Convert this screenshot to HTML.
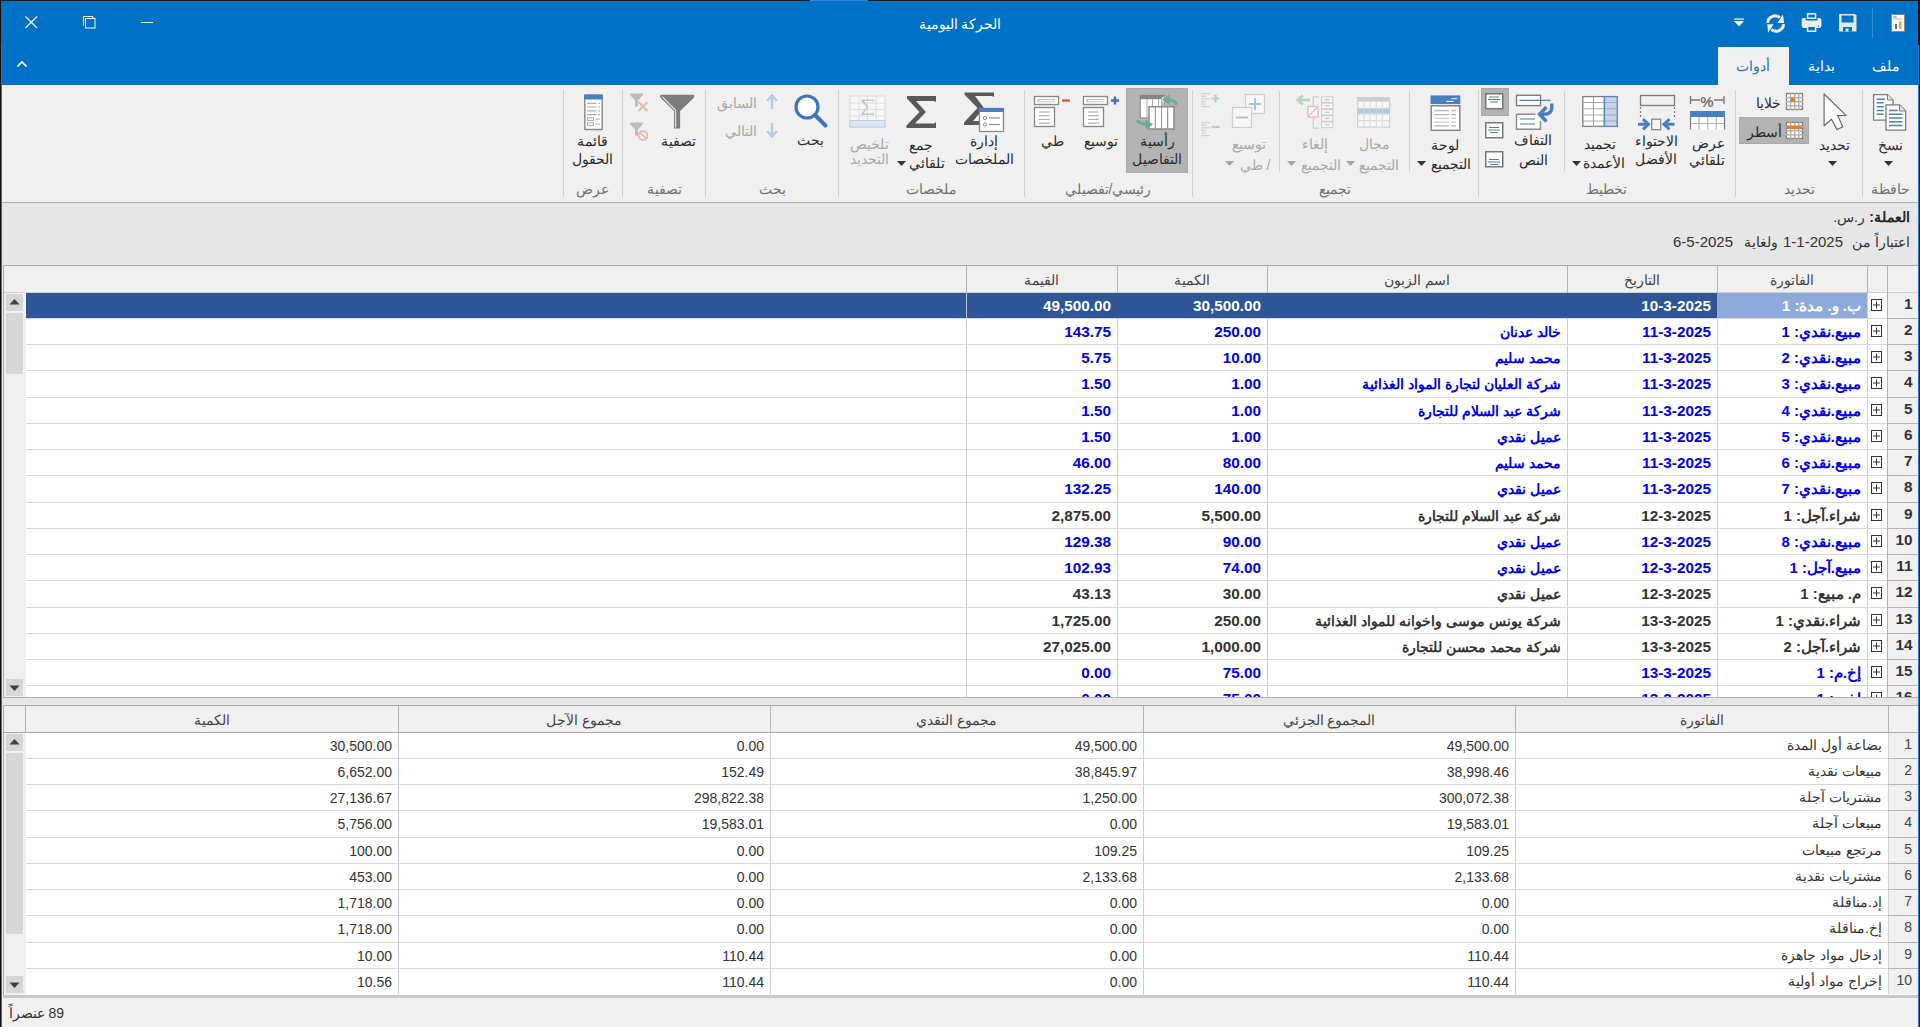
<!DOCTYPE html><html><head><meta charset="utf-8"><style>
*{box-sizing:border-box;margin:0;padding:0}
html,body{width:1920px;height:1027px;overflow:hidden;background:#f0f0f0;font-family:"Liberation Sans",sans-serif;color:#222;position:relative}
.a{position:absolute}
.t{position:absolute;white-space:nowrap;line-height:1}
.r{direction:rtl}
svg{position:absolute;overflow:visible}
</style></head><body>

<div class="a" style="left:0px;top:0px;width:1920px;height:85px;background:#0072c6;"></div>
<div class="a" style="left:0px;top:0px;width:1920px;height:1px;background:#1b1b1b;"></div>
<div class="a" style="left:810px;top:0px;width:58px;height:1px;background:#2d8be0;"></div>
<div class="t r" style="left:760.0px;top:12.0px;width:400px;height:24px;line-height:24px;text-align:center;font-size:14px;color:#ffffff;font-weight:400;">الحركة اليومية</div>
<svg style="left:20px;top:10px" width="160" height="30" viewBox="0 0 160 30"><path d="M5.5 6.5 L17 18 M17 6.5 L5.5 18" stroke="#f2f2f2" stroke-width="1.2" fill="none"/><path d="M63.5 15.5 V6.5 H73 V8.5" stroke="#f2f2f2" stroke-width="1" fill="none"/><rect x="65.5" y="8.5" width="9.5" height="9.5" stroke="#f2f2f2" stroke-width="1" fill="none"/><path d="M121 12.5 H133" stroke="#f2f2f2" stroke-width="1" fill="none"/></svg>
<svg style="left:14px;top:58px" width="16" height="12" viewBox="0 0 16 12"><path d="M3.5 8.5 L8 4 L12.5 8.5" stroke="#ffffff" stroke-width="1.6" fill="none"/></svg>
<div class="a" style="left:1872px;top:8px;width:1px;height:30px;background:#3d8ed6;"></div>
<svg style="left:1890px;top:13px" width="18" height="20" viewBox="0 0 18 20"><rect x="1.5" y="1.5" width="13" height="17" fill="#fafafa" stroke="#8a8a8a" stroke-width="1"/><rect x="3.5" y="3.5" width="3" height="1" fill="#4472c4"/><rect x="3.5" y="5.5" width="9" height="1" fill="#bbb"/><rect x="5" y="11" width="2" height="5" fill="#4472c4"/><rect x="9" y="8.5" width="2.5" height="7.5" fill="#e8a33d"/></svg>
<svg style="left:1837px;top:12px" width="22" height="22" viewBox="0 0 22 22"><path d="M2 2 H18 L19.5 3.5 V19.5 H2 Z" fill="#e6e6e6"/><rect x="4.5" y="3.5" width="12" height="7" fill="#0072c6"/><rect x="6" y="15" width="9" height="4.5" fill="#0072c6"/><rect x="8.5" y="16.5" width="3" height="3" fill="#e6e6e6"/></svg>
<svg style="left:1800px;top:12px" width="24" height="22" viewBox="0 0 24 22"><rect x="1.7" y="5.9" width="19.7" height="10" rx="1.8" fill="#eeeeee"/><rect x="5.6" y="5.9" width="11.9" height="2.6" fill="#0072c6"/><rect x="7.55" y="1.85" width="8" height="4.4" fill="#0072c6" stroke="#eeeeee" stroke-width="1.5"/><rect x="7.55" y="14.2" width="8" height="5" fill="#0072c6" stroke="#eeeeee" stroke-width="1.5"/><rect x="18" y="13.5" width="1" height="1.2" fill="#0072c6"/></svg>
<svg style="left:1764px;top:12px" width="22" height="22" viewBox="0 0 22 22"><g><path d="M3.6 10.9 A7.5 7.5 0 0 1 15.8 5.6" stroke="#eeeeee" stroke-width="3" fill="none"/><path d="M19 2.3 L20 10.9 L13.6 10.9 Z" fill="#eeeeee"/></g><g transform="rotate(180 11.6 11.55)"><path d="M3.6 10.9 A7.5 7.5 0 0 1 15.8 5.6" stroke="#eeeeee" stroke-width="3" fill="none"/><path d="M19 2.3 L20 10.9 L13.6 10.9 Z" fill="#eeeeee"/></g></svg>
<svg style="left:1732px;top:16px" width="14" height="14" viewBox="0 0 14 14"><rect x="2" y="2.5" width="10" height="1.2" fill="#f0f0f0"/><path d="M2 5 H12 L7 10.5 Z" fill="#f0f0f0"/></svg>
<div class="a" style="left:1718px;top:47px;width:71px;height:38px;background:#f0f0f0;"></div>
<div class="t r" style="left:1553.0px;top:54.0px;width:400px;height:24px;line-height:24px;text-align:center;font-size:14px;color:#2a6ebd;font-weight:400;">أدوات</div>
<div class="t r" style="left:1621.0px;top:54.0px;width:400px;height:24px;line-height:24px;text-align:center;font-size:14px;color:#ffffff;font-weight:400;">بداية</div>
<div class="t r" style="left:1686.0px;top:54.0px;width:400px;height:24px;line-height:24px;text-align:center;font-size:14px;color:#ffffff;font-weight:400;">ملف</div>
<div class="a" style="left:0px;top:0px;width:1px;height:1027px;background:#111;"></div>
<div class="a" style="left:1px;top:45px;width:1px;height:982px;background:#1a78d0;"></div>
<div class="a" style="left:1918px;top:45px;width:1px;height:982px;background:#1a78d0;"></div>
<div class="a" style="left:1919px;top:0px;width:1px;height:1027px;background:#111;"></div>
<div class="a" style="left:1918px;top:0px;width:1px;height:45px;background:#111;"></div>
<div class="a" style="left:2px;top:85px;width:1916px;height:117px;background:#f0f0f0;"></div>
<div class="a" style="left:2px;top:202px;width:1916px;height:1px;background:#acacac;"></div>
<div class="a" style="left:1862px;top:90px;width:1px;height:107px;background:#d2d2d2;"></div>
<div class="a" style="left:1735px;top:90px;width:1px;height:107px;background:#d2d2d2;"></div>
<div class="a" style="left:1478px;top:90px;width:1px;height:107px;background:#d2d2d2;"></div>
<div class="a" style="left:1192px;top:90px;width:1px;height:107px;background:#d2d2d2;"></div>
<div class="a" style="left:1024px;top:90px;width:1px;height:107px;background:#d2d2d2;"></div>
<div class="a" style="left:838px;top:90px;width:1px;height:107px;background:#d2d2d2;"></div>
<div class="a" style="left:705px;top:90px;width:1px;height:107px;background:#d2d2d2;"></div>
<div class="a" style="left:622px;top:90px;width:1px;height:107px;background:#d2d2d2;"></div>
<div class="a" style="left:563px;top:90px;width:1px;height:107px;background:#d2d2d2;"></div>
<div class="a" style="left:1564px;top:91px;width:1px;height:81px;background:#d2d2d2;"></div>
<div class="a" style="left:1409px;top:91px;width:1px;height:81px;background:#d2d2d2;"></div>
<div class="a" style="left:1279px;top:91px;width:1px;height:81px;background:#d2d2d2;"></div>
<div class="t r" style="left:1690.0px;top:177.0px;width:400px;height:24px;line-height:24px;text-align:center;font-size:14px;color:#707070;font-weight:400;">حافظة</div>
<div class="t r" style="left:1599.0px;top:177.0px;width:400px;height:24px;line-height:24px;text-align:center;font-size:14px;color:#707070;font-weight:400;">تحديد</div>
<div class="t r" style="left:1406.0px;top:177.0px;width:400px;height:24px;line-height:24px;text-align:center;font-size:14px;color:#707070;font-weight:400;">تخطيط</div>
<div class="t r" style="left:1135.0px;top:177.0px;width:400px;height:24px;line-height:24px;text-align:center;font-size:14px;color:#707070;font-weight:400;">تجميع</div>
<div class="t r" style="left:908.0px;top:177.0px;width:400px;height:24px;line-height:24px;text-align:center;font-size:14px;color:#707070;font-weight:400;">رئيسي/تفصيلي</div>
<div class="t r" style="left:731.0px;top:177.0px;width:400px;height:24px;line-height:24px;text-align:center;font-size:14px;color:#707070;font-weight:400;">ملخصات</div>
<div class="t r" style="left:572.0px;top:177.0px;width:400px;height:24px;line-height:24px;text-align:center;font-size:14px;color:#707070;font-weight:400;">بحث</div>
<div class="t r" style="left:464.0px;top:177.0px;width:400px;height:24px;line-height:24px;text-align:center;font-size:14px;color:#707070;font-weight:400;">تصفية</div>
<div class="t r" style="left:392.0px;top:177.0px;width:400px;height:24px;line-height:24px;text-align:center;font-size:14px;color:#707070;font-weight:400;">عرض</div>
<svg style="left:1872px;top:93px" width="36" height="40" viewBox="0 0 36 40"><path d="M1.6 1.6 H15.5 L21 7 V27.2 H1.6 Z" fill="#fff" stroke="#7a7a7a" stroke-width="1.3"/><path d="M15.5 1.6 V7 H21" fill="#e6e6e6" stroke="#7a7a7a" stroke-width="1"/><path d="M4.6 6.2 H13 M4.6 9.8 H11.8 M4.6 13.8 H11.8 M4.6 17.4 H11.8 M4.6 21.2 H11.8" stroke="#4a7fc0" stroke-width="1.5"/><path d="M14 11.9 H27.5 L33.6 18 V37.2 H14 Z" fill="#fff" stroke="#7a7a7a" stroke-width="1.3"/><path d="M27.5 11.9 V18 H33.6" fill="#e6e6e6" stroke="#7a7a7a" stroke-width="1"/><path d="M17 17.4 H25.7 M17 21.2 H30.5 M17 25 H30.5 M17 28.7 H30.5 M17 32.4 H30.5" stroke="#4a7fc0" stroke-width="1.5"/></svg>
<div class="t r" style="left:1690.0px;top:133.0px;width:400px;height:24px;line-height:24px;text-align:center;font-size:14px;color:#2a2a2a;font-weight:400;">نسخ</div>
<svg style="left:1883.5px;top:160.5px" width="9" height="5" viewBox="0 0 9 5"><path d="M0 0 H9 L4.5 5 Z" fill="#333"/></svg>
<svg style="left:1822px;top:92px" width="28" height="40" viewBox="0 0 28 40"><path d="M2.1 2 L2.1 33.8 L9.6 27.2 L15 37.6 L20.8 34.8 L15.6 23.6 L24 23.4 Z" fill="#fff" stroke="#6a6a6a" stroke-width="1.2" stroke-linejoin="round"/></svg>
<div class="t r" style="left:1634.0px;top:133.0px;width:400px;height:24px;line-height:24px;text-align:center;font-size:14px;color:#2a2a2a;font-weight:400;">تحديد</div>
<svg style="left:1827.5px;top:160.5px" width="9" height="5" viewBox="0 0 9 5"><path d="M0 0 H9 L4.5 5 Z" fill="#333"/></svg>
<svg style="left:1786px;top:93px" width="18" height="18" viewBox="0 0 18 18"><rect x="0.5" y="0.5" width="16" height="16" fill="#fff" stroke="#808080" stroke-width="1.3"/><rect x="3.8999999999999995" y="0" width="1.4" height="17" fill="#b0b0b0"/><rect x="0" y="3.8999999999999995" width="17" height="1.4" fill="#b0b0b0"/><rect x="7.999999999999999" y="0" width="1.4" height="17" fill="#b0b0b0"/><rect x="0" y="7.999999999999999" width="17" height="1.4" fill="#b0b0b0"/><rect x="12.1" y="0" width="1.4" height="17" fill="#b0b0b0"/><rect x="0" y="12.1" width="17" height="1.4" fill="#b0b0b0"/><rect x="5" y="5" width="4" height="4" fill="#e87b1c"/></svg>
<div class="t r" style="left:1568.0px;top:91.0px;width:400px;height:24px;line-height:24px;text-align:center;font-size:14px;color:#2a2a2a;font-weight:400;">خلايا</div>
<div class="a" style="left:1739px;top:117px;width:70px;height:27px;background:#b3b3b3;border:1px solid #a8a8a8"></div>
<svg style="left:1786px;top:122px" width="18" height="18" viewBox="0 0 18 18"><rect x="0.5" y="0.5" width="16" height="16" fill="#fff" stroke="#808080" stroke-width="1.3"/><rect x="3.8999999999999995" y="0" width="1.4" height="17" fill="#b0b0b0"/><rect x="0" y="3.8999999999999995" width="17" height="1.4" fill="#b0b0b0"/><rect x="7.999999999999999" y="0" width="1.4" height="17" fill="#b0b0b0"/><rect x="0" y="7.999999999999999" width="17" height="1.4" fill="#b0b0b0"/><rect x="12.1" y="0" width="1.4" height="17" fill="#b0b0b0"/><rect x="0" y="12.1" width="17" height="1.4" fill="#b0b0b0"/><rect x="1" y="3.5" width="15" height="3.5" fill="#e87b1c"/></svg>
<div class="t r" style="left:1564.0px;top:120.0px;width:400px;height:24px;line-height:24px;text-align:center;font-size:14px;color:#2a2a2a;font-weight:400;">أسطر</div>
<svg style="left:1689px;top:94px" width="38" height="37" viewBox="0 0 38 37"><path d="M1.5 2 V10 M1.5 6 H11 M35 2 V10 M35 6 H25" stroke="#777" stroke-width="1.3" fill="none"/><text x="18" y="12.5" font-family="Liberation Sans" font-weight="bold" font-size="15" text-anchor="middle" fill="#777">%</text><rect x="1" y="23" width="35" height="12.5" fill="#fff"/><rect x="1" y="17" width="35" height="6" fill="#4a7fc0"/><path d="M10 23 V35.5 M18.7 23 V35.5 M27.3 23 V35.5 M1 29.5 H36" stroke="#b4b4b4" stroke-width="1.2" fill="none"/><path d="M1.5 23 V35.5 M35.5 23 V35.5" stroke="#808080" stroke-width="1.3" fill="none"/></svg>
<div class="t r" style="left:1508.0px;top:131.0px;width:400px;height:24px;line-height:24px;text-align:center;font-size:14px;color:#2a2a2a;font-weight:400;">عرض</div>
<div class="t r" style="left:1507.0px;top:148.0px;width:400px;height:24px;line-height:24px;text-align:center;font-size:14px;color:#2a2a2a;font-weight:400;">تلقائي</div>
<svg style="left:1638px;top:94px" width="38" height="37" viewBox="0 0 38 37"><rect x="2.5" y="1.5" width="34" height="10" fill="none" stroke="#7a7a7a" stroke-width="1.3"/><path d="M2.5 13 V23 M36.5 13 V23" stroke="#777" stroke-width="1.2" stroke-dasharray="2 2" fill="none"/><rect x="13.7" y="25.2" width="9" height="10.5" fill="#f4f4f4" stroke="#888" stroke-width="1.3"/><path d="M0 30.3 H9 M5 25.2 L10.5 30.3 L5 35.4" stroke="#4a7fc0" stroke-width="3" fill="none"/><path d="M36.5 30.3 H27.5 M31.5 25.2 L26 30.3 L31.5 35.4" stroke="#4a7fc0" stroke-width="3" fill="none"/></svg>
<div class="t r" style="left:1456.0px;top:129.0px;width:400px;height:24px;line-height:24px;text-align:center;font-size:14px;color:#2a2a2a;font-weight:400;">الاحتواء</div>
<div class="t r" style="left:1456.0px;top:147.0px;width:400px;height:24px;line-height:24px;text-align:center;font-size:14px;color:#2a2a2a;font-weight:400;">الأفضل</div>
<svg style="left:1582px;top:96px" width="37" height="32" viewBox="0 0 37 32"><rect x="0.8" y="0.6" width="34.5" height="29.8" fill="#fff" stroke="#808080" stroke-width="1.3"/><rect x="22.6" y="0.6" width="12.6" height="29.8" fill="#c5d6ea"/><path d="M11.5 1 V31 M1 6.5 H35 M1 12.8 H35 M1 19 H35 M1 25 H35" stroke="#a8a8a8" stroke-width="1.1" fill="none"/><path d="M22.2 0.6 V30.4" stroke="#808080" stroke-width="1.2"/><rect x="22.6" y="0.6" width="12.6" height="29.8" fill="none" stroke="#5b8cc6" stroke-width="1.3"/></svg>
<div class="t r" style="left:1400.0px;top:132.0px;width:400px;height:24px;line-height:24px;text-align:center;font-size:14px;color:#2a2a2a;font-weight:400;">تجميد</div>
<div class="t r" style="left:1404.0px;top:151.0px;width:400px;height:24px;line-height:24px;text-align:center;font-size:14px;color:#2a2a2a;font-weight:400;">الأعمدة</div>
<svg style="left:1571.5px;top:160.5px" width="9" height="5" viewBox="0 0 9 5"><path d="M0 0 H9 L4.5 5 Z" fill="#333"/></svg>
<svg style="left:1515px;top:94px" width="40" height="37" viewBox="0 0 40 37"><rect x="1.5" y="1.3" width="24" height="10.3" fill="#fff" stroke="#7d7d7d" stroke-width="1.4"/><path d="M5 6.4 H35" stroke="#4a7fc0" stroke-width="1.2" stroke-linecap="round"/><rect x="1.5" y="20.2" width="24" height="15" fill="#fff"/><path d="M20.5 20.2 H1.5 V35.2 H25.5 V27" fill="none" stroke="#8a8a8a" stroke-width="1.4"/><path d="M5 25 H20 M5 30 H20" stroke="#7fa6d2" stroke-width="1.5"/><path d="M36.8 9.5 V13.5 C36.8 18 33.5 20.3 28.5 20.3 H25" stroke="#4a7fc0" stroke-width="3.4" fill="none"/><path d="M31.5 13 L24.5 20.3 L31.5 27.5" stroke="#4a7fc0" stroke-width="3.4" fill="none" stroke-linejoin="miter"/></svg>
<div class="t r" style="left:1333.0px;top:128.0px;width:400px;height:24px;line-height:24px;text-align:center;font-size:14px;color:#2a2a2a;font-weight:400;">التفاف</div>
<div class="t r" style="left:1333.0px;top:148.0px;width:400px;height:24px;line-height:24px;text-align:center;font-size:14px;color:#2a2a2a;font-weight:400;">النص</div>
<div class="a" style="left:1481px;top:88px;width:28px;height:28px;background:#b3b3b3;border:1px solid #a8a8a8"></div>
<svg style="left:1485px;top:93px" width="19" height="17" viewBox="0 0 19 17"><rect x="0.75" y="0.75" width="17" height="15" fill="#fff" stroke="#777" stroke-width="1.5"/><path d="M4 4.0 H14 M3 6.5 H15 M5 9.0 H13" stroke="#4a7fc0" stroke-width="1.1"/></svg>
<svg style="left:1485px;top:122px" width="19" height="17" viewBox="0 0 19 17"><rect x="0.75" y="0.75" width="17" height="15" fill="#fff" stroke="#777" stroke-width="1.5"/><path d="M4 5.5 H14 M3 8.0 H15 M5 10.5 H13" stroke="#4a7fc0" stroke-width="1.1"/></svg>
<svg style="left:1485px;top:151px" width="19" height="17" viewBox="0 0 19 17"><rect x="0.75" y="0.75" width="17" height="15" fill="#fff" stroke="#777" stroke-width="1.5"/><path d="M4 8.5 H14 M3 11.0 H15 M5 13.5 H13" stroke="#4a7fc0" stroke-width="1.1"/></svg>
<svg style="left:1429.5px;top:94.5px" width="32" height="37" viewBox="0 0 32 37"><rect x="0.5" y="0.4" width="29.8" height="8.7" fill="#4a7fc0"/><path d="M21.3 3.6 H27.3" stroke="#c8d8ea" stroke-width="1.3"/><path d="M16.3 6.4 H23.4" stroke="#ffffff" stroke-width="1.1"/><rect x="1.2" y="10.8" width="28.6" height="24.5" fill="#fff" stroke="#858585" stroke-width="1.5"/><path d="M4.2 15.7 H19 M21.3 15.7 H26" stroke="#b4b4b4" stroke-width="1.2"/><path d="M4.2 19.6 H19 M21.3 19.6 H26" stroke="#b4b4b4" stroke-width="1.2"/><path d="M4.2 23.3 H19 M21.3 23.3 H26" stroke="#cccccc" stroke-width="1.2"/><path d="M4.2 27.2 H19 M21.3 27.2 H26" stroke="#cccccc" stroke-width="1.2"/><path d="M4.2 30.8 H19 M21.3 30.8 H26" stroke="#b4b4b4" stroke-width="1.2"/></svg>
<div class="t r" style="left:1245.0px;top:133.0px;width:400px;height:24px;line-height:24px;text-align:center;font-size:14px;color:#2a2a2a;font-weight:400;">لوحة</div>
<div class="t r" style="left:1251.0px;top:152.0px;width:400px;height:24px;line-height:24px;text-align:center;font-size:14px;color:#2a2a2a;font-weight:400;">التجميع</div>
<svg style="left:1416.5px;top:160.5px" width="9" height="5" viewBox="0 0 9 5"><path d="M0 0 H9 L4.5 5 Z" fill="#333"/></svg>
<svg style="left:1357px;top:97px" width="34" height="31" viewBox="0 0 34 31"><rect x="0.6" y="0.6" width="32" height="29.5" fill="#f7f7f7" stroke="#d0d0d0" stroke-width="1.2"/><rect x="0.6" y="0.6" width="32" height="4" fill="#cdcdcd"/><path d="M6.8 4 V30 M13 4 V30 M19.2 4 V30 M25.4 4 V30 M1 11.3 H32.5 M1 17.2 H32.5 M1 23.6 H32.5" stroke="#dcdcdc" stroke-width="1.1"/><rect x="1" y="11.6" width="31.5" height="5" fill="#b3c8de"/><path d="M6.8 11.6 V16.6 M13 11.6 V16.6 M19.2 11.6 V16.6 M25.4 11.6 V16.6" stroke="#c9d7e6" stroke-width="1"/></svg>
<div class="t r" style="left:1174.0px;top:132.0px;width:400px;height:24px;line-height:24px;text-align:center;font-size:14px;color:#a8a8a8;font-weight:400;">مجال</div>
<div class="t r" style="left:1179.0px;top:153.0px;width:400px;height:24px;line-height:24px;text-align:center;font-size:14px;color:#a8a8a8;font-weight:400;">التجميع</div>
<svg style="left:1345.5px;top:160.5px" width="9" height="5" viewBox="0 0 9 5"><path d="M0 0 H9 L4.5 5 Z" fill="#a6a6a6"/></svg>
<svg style="left:1296px;top:95px" width="40" height="36" viewBox="0 0 40 36"><path d="M1 5 H14 M7 0.5 L1.5 5 L7 9.5" stroke="#b6d3c4" stroke-width="2.5" fill="none"/><path d="M23 1.8 H17.2 V33.2 H23" stroke="#cfcfcf" stroke-width="1.3" fill="none"/><rect x="12" y="11.5" width="10" height="10.5" fill="#fff" stroke="#ebb5a8" stroke-width="1.3"/><path d="M13 21 L21 12.5" stroke="#ebb5a8" stroke-width="1.3"/><rect x="25.6" y="1.8" width="11.3" height="5.6" fill="#f7f7f7" stroke="#cfcfcf" stroke-width="1.2"/><path d="M28.7 4.6 H33.7" stroke="#a9c0da" stroke-width="1"/><rect x="25.6" y="8.1" width="11.3" height="5.6" fill="#f7f7f7" stroke="#cfcfcf" stroke-width="1.2"/><path d="M28.7 10.899999999999999 H33.7" stroke="#a9c0da" stroke-width="1"/><rect x="25.6" y="14.4" width="11.3" height="5.6" fill="#f7f7f7" stroke="#cfcfcf" stroke-width="1.2"/><path d="M28.7 17.2 H33.7" stroke="#a9c0da" stroke-width="1"/><rect x="25.6" y="20.7" width="11.3" height="5.6" fill="#f7f7f7" stroke="#cfcfcf" stroke-width="1.2"/><path d="M28.7 23.5 H33.7" stroke="#a9c0da" stroke-width="1"/><rect x="25.6" y="27.0" width="11.3" height="5.6" fill="#f7f7f7" stroke="#cfcfcf" stroke-width="1.2"/><path d="M28.7 29.799999999999997 H33.7" stroke="#a9c0da" stroke-width="1"/></svg>
<div class="t r" style="left:1115.0px;top:132.0px;width:400px;height:24px;line-height:24px;text-align:center;font-size:14px;color:#a8a8a8;font-weight:400;">إلغاء</div>
<div class="t r" style="left:1121.0px;top:153.0px;width:400px;height:24px;line-height:24px;text-align:center;font-size:14px;color:#a8a8a8;font-weight:400;">التجميع</div>
<svg style="left:1286.5px;top:160.5px" width="9" height="5" viewBox="0 0 9 5"><path d="M0 0 H9 L4.5 5 Z" fill="#a6a6a6"/></svg>
<svg style="left:1231px;top:94px" width="37" height="36" viewBox="0 0 37 36"><rect x="14.5" y="0.5" width="19" height="19" fill="#f7f7f7" stroke="#cfcfcf" stroke-width="1.2"/><path d="M24 4 V16 M18 10 H30" stroke="#a9c0da" stroke-width="2"/><rect x="1.5" y="13.5" width="19" height="20" fill="#f7f7f7" stroke="#cfcfcf" stroke-width="1.2"/><path d="M5 23.5 H17" stroke="#a9c0da" stroke-width="2"/></svg>
<div class="t r" style="left:1049.0px;top:132.0px;width:400px;height:24px;line-height:24px;text-align:center;font-size:14px;color:#a8a8a8;font-weight:400;">توسيع</div>
<div class="t r" style="left:1055.0px;top:153.0px;width:400px;height:24px;line-height:24px;text-align:center;font-size:14px;color:#a8a8a8;font-weight:400;">/ طي</div>
<svg style="left:1224.5px;top:160.5px" width="9" height="5" viewBox="0 0 9 5"><path d="M0 0 H9 L4.5 5 Z" fill="#a6a6a6"/></svg>
<svg style="left:1201px;top:93px" width="20" height="18" viewBox="0 0 20 18"><rect x="0" y="0.0" width="9" height="1.2" fill="#d0d0d0"/><rect x="0" y="2.6" width="5" height="1.2" fill="#d0d0d0"/><rect x="0" y="5.2" width="9" height="1.2" fill="#d0d0d0"/><rect x="0" y="7.800000000000001" width="5" height="1.2" fill="#d0d0d0"/><rect x="0" y="10.4" width="5" height="1.2" fill="#d0d0d0"/><rect x="0" y="13.0" width="9" height="1.2" fill="#d0d0d0"/><path d="M14.5 1.5 V9.5 M10.5 5.5 H18.5" stroke="#b6d3c4" stroke-width="2.2"/></svg>
<svg style="left:1201px;top:122px" width="20" height="18" viewBox="0 0 20 18"><rect x="0" y="0.0" width="9" height="1.2" fill="#d0d0d0"/><rect x="0" y="2.6" width="5" height="1.2" fill="#d0d0d0"/><rect x="0" y="5.2" width="9" height="1.2" fill="#d0d0d0"/><rect x="0" y="7.800000000000001" width="5" height="1.2" fill="#d0d0d0"/><rect x="0" y="10.4" width="5" height="1.2" fill="#d0d0d0"/><rect x="0" y="13.0" width="9" height="1.2" fill="#d0d0d0"/><path d="M10.5 5 H18.5" stroke="#ebb5a8" stroke-width="2.2"/></svg>
<div class="a" style="left:1126px;top:88px;width:62px;height:85px;background:#b3b3b3;border:1px solid #aaaaaa"></div>
<svg style="left:1136px;top:94px" width="42" height="37" viewBox="0 0 42 37"><rect x="4.3" y="1.4" width="24" height="22.5" fill="#fff" stroke="#8a8a8a" stroke-width="1"/><path d="M3.8 0.9 H29 L25 5.3 H3.8 Z" fill="#858585"/><path d="M11 5 V24 M16.5 5 V12 M22.6 5 V12" stroke="#a8a8a8" stroke-width="1"/><path d="M25 5.3 L30 12 H25 Z" fill="#b3b3b3"/><rect x="13" y="12.7" width="25" height="22.3" fill="#fff" stroke="#8a8a8a" stroke-width="1.5"/><path d="M19.4 13 V35 M25.5 13 V35 M31.6 13 V35" stroke="#9a9a9a" stroke-width="1.2"/><path d="M30 5.6 C35 5.6 39.5 7 40.3 10.8" stroke="#70a996" stroke-width="3.2" fill="none"/><path d="M25.6 5.4 L33.4 0.6 L33.8 10.8 Z" fill="#70a996"/><path d="M12.5 30.2 C7 30.2 2.5 29.5 1.3 26.2" stroke="#70a996" stroke-width="3.2" fill="none"/><path d="M17 30.2 L9.2 25.6 L9.5 35.8 Z" fill="#70a996"/></svg>
<div class="t r" style="left:957.0px;top:129.0px;width:400px;height:24px;line-height:24px;text-align:center;font-size:14px;color:#2a2a2a;font-weight:400;">رأسية</div>
<div class="t r" style="left:957.0px;top:147.0px;width:400px;height:24px;line-height:24px;text-align:center;font-size:14px;color:#2a2a2a;font-weight:400;">التفاصيل</div>
<svg style="left:1082px;top:95px" width="38" height="34" viewBox="0 0 38 34"><rect x="1.5" y="1.5" width="24" height="8" fill="#fff" stroke="#888" stroke-width="1.3"/><path d="M5 4.5 H22 M5 6.8 H22" stroke="#c2c2c2" stroke-width="1"/><path d="M5 4.5 V7" stroke="#999" stroke-width="1"/><rect x="1.5" y="12.5" width="20" height="19" fill="#fff" stroke="#888" stroke-width="1.3"/><path d="M6 17.0 H17" stroke="#b0b0b0" stroke-width="1.2"/><path d="M6 20.7 H17" stroke="#b0b0b0" stroke-width="1.2"/><path d="M6 24.4 H17" stroke="#b0b0b0" stroke-width="1.2"/><path d="M6 28.1 H17" stroke="#b0b0b0" stroke-width="1.2"/><path d="M33 1.5 V9.5 M29 5.5 H37" stroke="#3c72b6" stroke-width="2.4"/></svg>
<div class="t r" style="left:901.0px;top:129.0px;width:400px;height:24px;line-height:24px;text-align:center;font-size:14px;color:#2a2a2a;font-weight:400;">توسيع</div>
<svg style="left:1033px;top:95px" width="38" height="34" viewBox="0 0 38 34"><rect x="1.5" y="1.5" width="24" height="8" fill="#fff" stroke="#888" stroke-width="1.3"/><path d="M5 4.5 H22 M5 6.8 H22" stroke="#c2c2c2" stroke-width="1"/><path d="M5 4.5 V7" stroke="#999" stroke-width="1"/><rect x="1.5" y="12.5" width="20" height="19" fill="#fff" stroke="#888" stroke-width="1.3"/><path d="M6 17.0 H17" stroke="#b0b0b0" stroke-width="1.2"/><path d="M6 20.7 H17" stroke="#b0b0b0" stroke-width="1.2"/><path d="M6 24.4 H17" stroke="#b0b0b0" stroke-width="1.2"/><path d="M6 28.1 H17" stroke="#b0b0b0" stroke-width="1.2"/><path d="M29 5.5 H37" stroke="#e0553a" stroke-width="2.4"/></svg>
<div class="t r" style="left:852.0px;top:129.0px;width:400px;height:24px;line-height:24px;text-align:center;font-size:14px;color:#2a2a2a;font-weight:400;">طي</div>
<svg style="left:962px;top:91px" width="44" height="42" viewBox="0 0 44 42"><path d="M2.5 1.5 H32 L32 6 L30 5 H13 L22 17 L11 30 H32 V34 H2 L2 31.5 L15.5 17 L2.5 3.5 Z" fill="#595959"/><rect x="17.5" y="17.5" width="24" height="23" fill="#fff" stroke="#888" stroke-width="1.3"/><rect x="17" y="17" width="25" height="4" fill="#4a7fc0"/><circle cx="23" cy="27" r="1.6" fill="none" stroke="#888" stroke-width="1"/><path d="M27 27 H38" stroke="#888" stroke-width="1.1"/><circle cx="23" cy="33.5" r="1.6" fill="none" stroke="#888" stroke-width="1"/><path d="M27 33.5 H38" stroke="#888" stroke-width="1.1"/></svg>
<div class="t r" style="left:784.0px;top:129.0px;width:400px;height:24px;line-height:24px;text-align:center;font-size:14px;color:#2a2a2a;font-weight:400;">إدارة</div>
<div class="t r" style="left:784.0px;top:147.0px;width:400px;height:24px;line-height:24px;text-align:center;font-size:14px;color:#2a2a2a;font-weight:400;">الملخصات</div>
<svg style="left:905px;top:95px" width="34" height="36" viewBox="0 0 34 36"><path d="M2 1 H31 V7 L29 6 H11 L21 17 L10 28.5 H29 L31 27 V33 H1.5 V30.5 L14.5 17 L2 3.5 Z" fill="#595959"/></svg>
<div class="t r" style="left:721.0px;top:133.0px;width:400px;height:24px;line-height:24px;text-align:center;font-size:14px;color:#2a2a2a;font-weight:400;">جمع</div>
<div class="t r" style="left:727.0px;top:151.0px;width:400px;height:24px;line-height:24px;text-align:center;font-size:14px;color:#2a2a2a;font-weight:400;">تلقائي</div>
<svg style="left:896.5px;top:160.5px" width="9" height="5" viewBox="0 0 9 5"><path d="M0 0 H9 L4.5 5 Z" fill="#333"/></svg>
<svg style="left:849px;top:95px" width="38" height="35" viewBox="0 0 38 35"><rect x="1" y="1" width="35" height="31" fill="#f7f7f7" stroke="#d9d9d9" stroke-width="1"/><path d="M10 1 V32 M18.5 1 V32 M27 1 V32 M1 8 H36 M1 14.5 H36 M1 21 H36" stroke="#dedede" stroke-width="1"/><rect x="1" y="25.5" width="35" height="6.5" fill="#dde7f2" stroke="#b8cde3" stroke-width="1"/><path d="M12 4.5 H25 V7 L23.5 6 H15 L19.5 12 L14.5 18.5 H23.5 L25 17.5 V20 H12 V19 L17.5 12 L12 5.5 Z" fill="#c6c6c6"/></svg>
<div class="t r" style="left:669.0px;top:132.0px;width:400px;height:24px;line-height:24px;text-align:center;font-size:14px;color:#a8a8a8;font-weight:400;">تلخيص</div>
<div class="t r" style="left:669.0px;top:147.0px;width:400px;height:24px;line-height:24px;text-align:center;font-size:14px;color:#a8a8a8;font-weight:400;">التحديد</div>
<svg style="left:792px;top:92px" width="38" height="38" viewBox="0 0 38 38"><circle cx="15" cy="15" r="11" fill="#fff" stroke="#3e74b8" stroke-width="3.2"/><path d="M23 23 L33.5 33.5" stroke="#3e74b8" stroke-width="4" stroke-linecap="round"/></svg>
<div class="t r" style="left:610.0px;top:128.0px;width:400px;height:24px;line-height:24px;text-align:center;font-size:14px;color:#2a2a2a;font-weight:400;">بحث</div>
<svg style="left:764px;top:93px" width="16" height="18" viewBox="0 0 16 18"><path d="M8 16 V3 M3 8 L8 2.5 L13 8" stroke="#b4cbe3" stroke-width="2.4" fill="none"/></svg>
<svg style="left:764px;top:121px" width="16" height="18" viewBox="0 0 16 18"><path d="M8 2 V15 M3 10 L8 15.5 L13 10" stroke="#b4cbe3" stroke-width="2.4" fill="none"/></svg>
<div class="t r" style="left:-43px;top:91.0px;width:800px;height:24px;line-height:24px;text-align:right;font-size:14px;color:#a8a8a8;font-weight:400;">السابق</div>
<div class="t r" style="left:-43px;top:119.0px;width:800px;height:24px;line-height:24px;text-align:right;font-size:14px;color:#a8a8a8;font-weight:400;">التالي</div>
<svg style="left:659px;top:94px" width="38" height="36" viewBox="0 0 38 36"><path d="M1.3 0.8 H35.1 V3.4 L21.1 17 V34.4 H15 V17 L1.3 3.4 Z" fill="#7d7d7d"/><path d="M3.2 2.6 L16.6 16.3 V33.4" fill="none" stroke="#e2e2e2" stroke-width="1.2"/></svg>
<div class="t r" style="left:478.0px;top:129.0px;width:400px;height:24px;line-height:24px;text-align:center;font-size:14px;color:#2a2a2a;font-weight:400;">تصفية</div>
<svg style="left:629px;top:92px" width="22" height="22" viewBox="0 0 22 22"><path d="M1 1.5 H14 V3 L9 8.5 V14.5 H6 V8.5 L1 3 Z" fill="#bdbdbd"/><path d="M9.5 10 L18.5 19 M18.5 10 L9.5 19" stroke="#ebb5a8" stroke-width="1.8"/></svg>
<svg style="left:629px;top:121px" width="22" height="22" viewBox="0 0 22 22"><path d="M1 1.5 H14 V3 L9 8.5 V14.5 H6 V8.5 L1 3 Z" fill="#bdbdbd"/><circle cx="14" cy="14.5" r="4.5" fill="#f0f0f0" stroke="#ebb5a8" stroke-width="1.8"/><path d="M11 11.5 L17 17.5" stroke="#ebb5a8" stroke-width="1.6"/></svg>
<svg style="left:583px;top:94px" width="22" height="37" viewBox="0 0 22 37"><rect x="1.8" y="1.2" width="17.4" height="34.3" rx="0.6" fill="#fff" stroke="#888" stroke-width="1.4"/><rect x="1.1" y="0.5" width="18.8" height="5" fill="#4a7fc0"/><path d="M4 9.3 H13.5 M15.3 9.3 H17" stroke="#b0b0b0" stroke-width="1.2"/><path d="M4 13 H13.5 M15.3 13 H17" stroke="#b0b0b0" stroke-width="1.2"/><path d="M4 16.9 H13.5 M15.3 16.9 H17" stroke="#b0b0b0" stroke-width="1.2"/><path d="M4 20.6 H13.5 M15.3 20.6 H17" stroke="#b0b0b0" stroke-width="1.2"/><rect x="4.5" y="23.8" width="6" height="2.6" fill="none" stroke="#a8a8a8" stroke-width="1"/><path d="M12.3 25.1 H17" stroke="#c0c0c0" stroke-width="1.2"/><rect x="4.5" y="28.8" width="6" height="2.6" fill="none" stroke="#a8a8a8" stroke-width="1"/><path d="M12.3 30.1 H17" stroke="#c0c0c0" stroke-width="1.2"/></svg>
<div class="t r" style="left:392.0px;top:129.0px;width:400px;height:24px;line-height:24px;text-align:center;font-size:14px;color:#2a2a2a;font-weight:400;">قائمة</div>
<div class="t r" style="left:392.0px;top:147.0px;width:400px;height:24px;line-height:24px;text-align:center;font-size:14px;color:#2a2a2a;font-weight:400;">الحقول</div>
<div class="a" style="left:2px;top:203px;width:1916px;height:62px;background:#e6e6e6;"></div>
<div class="t r" style="left:1110px;top:205.0px;width:800px;height:24px;line-height:24px;text-align:right;font-size:14px;color:#222;font-weight:400;"><b>العملة:</b></div>
<div class="t r" style="left:1065px;top:205.0px;width:800px;height:24px;line-height:24px;text-align:right;font-size:14px;color:#333;font-weight:400;">ر.س.</div>
<div class="t r" style="left:1110px;top:230.0px;width:800px;height:24px;line-height:24px;text-align:right;font-size:14px;color:#333;font-weight:400;">اعتباراً من</div>
<div class="t r" style="left:1043px;top:230.0px;width:800px;height:24px;line-height:24px;text-align:right;font-size:15px;color:#333;font-weight:400;"><span style="direction:ltr;unicode-bidi:embed">1-1-2025</span></div>
<div class="t r" style="left:978px;top:230.0px;width:800px;height:24px;line-height:24px;text-align:right;font-size:14.4px;color:#333;font-weight:400;">ولغاية</div>
<div class="t r" style="left:933px;top:230.0px;width:800px;height:24px;line-height:24px;text-align:right;font-size:15px;color:#333;font-weight:400;"><span style="direction:ltr;unicode-bidi:embed">6-5-2025</span></div>
<div class="a" style="left:3px;top:265px;width:1915px;height:432px;background:#ffffff;"></div>
<div class="a" style="left:3px;top:265px;width:1915px;height:1px;background:#a8a8a8;"></div>
<div class="a" style="left:3px;top:265px;width:1px;height:432px;background:#a8a8a8;"></div>
<div class="a" style="left:4px;top:266px;width:1914px;height:27px;background:#f0f0f0;"></div>
<div class="a" style="left:4px;top:292px;width:1914px;height:1px;background:#d0d0d0;"></div>
<div class="a" style="left:4px;top:293px;width:22px;height:404px;background:#f0f0f0;"></div>
<div class="a" style="left:6px;top:294px;width:17px;height:17px;background:#d6d6d6;"></div>
<svg style="left:6px;top:294px" width="17" height="17" viewBox="0 0 17 17"><path d="M3.5 10.5 H13.5 L8.5 5 Z" fill="#404040"/></svg>
<div class="a" style="left:6px;top:313px;width:17px;height:61px;background:#d6d6d6;"></div>
<div class="a" style="left:6px;top:679px;width:17px;height:17px;background:#d6d6d6;"></div>
<svg style="left:6px;top:679px" width="17" height="17" viewBox="0 0 17 17"><path d="M3.5 6.5 H13.5 L8.5 12 Z" fill="#404040"/></svg>
<div class="a" style="left:966px;top:266px;width:1px;height:27px;background:#b4b4b4;"></div>
<div class="a" style="left:1117px;top:266px;width:1px;height:27px;background:#b4b4b4;"></div>
<div class="a" style="left:1267px;top:266px;width:1px;height:27px;background:#b4b4b4;"></div>
<div class="a" style="left:1567px;top:266px;width:1px;height:27px;background:#b4b4b4;"></div>
<div class="a" style="left:1717px;top:266px;width:1px;height:27px;background:#b4b4b4;"></div>
<div class="a" style="left:1867px;top:266px;width:1px;height:27px;background:#b4b4b4;"></div>
<div class="a" style="left:1887px;top:266px;width:1px;height:27px;background:#b4b4b4;"></div>
<div class="t r" style="left:841.5px;top:267.5px;width:400px;height:24px;line-height:24px;text-align:center;font-size:14px;color:#444;font-weight:400;">القيمة</div>
<div class="t r" style="left:992.0px;top:267.5px;width:400px;height:24px;line-height:24px;text-align:center;font-size:14px;color:#444;font-weight:400;">الكمية</div>
<div class="t r" style="left:1217.0px;top:267.5px;width:400px;height:24px;line-height:24px;text-align:center;font-size:14px;color:#444;font-weight:400;">اسم الزبون</div>
<div class="t r" style="left:1442.0px;top:267.5px;width:400px;height:24px;line-height:24px;text-align:center;font-size:14px;color:#444;font-weight:400;">التاريخ</div>
<div class="t r" style="left:1592.0px;top:267.5px;width:400px;height:24px;line-height:24px;text-align:center;font-size:14px;color:#444;font-weight:400;">الفاتورة</div>
<div class="a" style="left:26px;top:292px;width:1892px;height:405px;overflow:hidden">
<div class="a" style="left:1861px;top:1px;width:31px;height:25px;background:#f0f0f0;"></div>
<div class="a" style="left:0px;top:1px;width:1841px;height:25px;background:#2e5596;"></div>
<div class="a" style="left:1691px;top:1px;width:150px;height:25px;background:#8eaadb;"></div>
<div class="a" style="left:0px;top:26px;width:1861px;height:1px;background:#d8d8d8;"></div>
<div class="a" style="left:1861px;top:26px;width:31px;height:1px;background:#b4b4b4;"></div>
<div class="a" style="left:940px;top:1px;width:1px;height:25px;background:#b8c4d8;"></div>
<div class="a" style="left:1091px;top:1px;width:1px;height:25px;background:#2e5596;"></div>
<div class="a" style="left:1241px;top:1px;width:1px;height:25px;background:#2e5596;"></div>
<div class="a" style="left:1541px;top:1px;width:1px;height:25px;background:#2e5596;"></div>
<div class="a" style="left:1691px;top:1px;width:1px;height:25px;background:#8eaadb;"></div>
<div class="a" style="left:1841px;top:1px;width:1px;height:25px;background:#c6d0dc;"></div>
<div class="a" style="left:1861px;top:1px;width:1px;height:25px;background:#b4b4b4;"></div>
<div class="a" style="left:1845px;top:7px;width:11px;height:12px;background:transparent;border:1px solid #333"></div>
<svg style="left:1845px;top:7px" width="11" height="12"><path d="M5.5 2.5 V9.5 M2 6 H9" stroke="#333" stroke-width="1"/></svg>
<div class="t" style="left:1235px;top:1.625px;width:600px;height:24px;line-height:24px;text-align:right;direction:rtl;font-size:14.9px;color:#ffffff;font-weight:700;">ب. و. مدة: 1</div>
<div class="t" style="left:1085px;top:1.625px;width:600px;height:24px;line-height:24px;text-align:right;direction:ltr;font-size:15.3px;color:#ffffff;font-weight:700;">10-3-2025</div>
<div class="t" style="left:635px;top:1.625px;width:600px;height:24px;line-height:24px;text-align:right;direction:ltr;font-size:15.3px;color:#ffffff;font-weight:700;">30,500.00</div>
<div class="t" style="left:485px;top:1.625px;width:600px;height:24px;line-height:24px;text-align:right;direction:ltr;font-size:15.3px;color:#ffffff;font-weight:700;">49,500.00</div>
<div class="t" style="left:1286.5px;top:-0.375px;width:600px;height:24px;line-height:24px;text-align:right;direction:ltr;font-size:15.3px;color:#333;font-weight:700;">1</div>
<div class="a" style="left:1861px;top:27px;width:31px;height:25px;background:#f0f0f0;"></div>
<div class="a" style="left:0px;top:52px;width:1861px;height:1px;background:#d8d8d8;"></div>
<div class="a" style="left:1861px;top:52px;width:31px;height:1px;background:#b4b4b4;"></div>
<div class="a" style="left:940px;top:27px;width:1px;height:25px;background:#d0d0d0;"></div>
<div class="a" style="left:1091px;top:27px;width:1px;height:25px;background:#c6d0dc;"></div>
<div class="a" style="left:1241px;top:27px;width:1px;height:25px;background:#c6d0dc;"></div>
<div class="a" style="left:1541px;top:27px;width:1px;height:25px;background:#c6d0dc;"></div>
<div class="a" style="left:1691px;top:27px;width:1px;height:25px;background:#c6d0dc;"></div>
<div class="a" style="left:1841px;top:27px;width:1px;height:25px;background:#c6d0dc;"></div>
<div class="a" style="left:1861px;top:27px;width:1px;height:25px;background:#b4b4b4;"></div>
<div class="a" style="left:1845px;top:33px;width:11px;height:12px;background:transparent;border:1px solid #333"></div>
<svg style="left:1845px;top:33px" width="11" height="12"><path d="M5.5 2.5 V9.5 M2 6 H9" stroke="#333" stroke-width="1"/></svg>
<div class="t" style="left:1235px;top:27.875px;width:600px;height:24px;line-height:24px;text-align:right;direction:rtl;font-size:14.9px;color:#0000f0;font-weight:700;">مبيع.نقدي: 1</div>
<div class="t" style="left:1085px;top:27.875px;width:600px;height:24px;line-height:24px;text-align:right;direction:ltr;font-size:15.3px;color:#0000f0;font-weight:700;">11-3-2025</div>
<div class="t" style="left:935px;top:27.875px;width:600px;height:24px;line-height:24px;text-align:right;direction:rtl;font-size:14.2px;color:#0000f0;font-weight:700;">خالد عدنان</div>
<div class="t" style="left:635px;top:27.875px;width:600px;height:24px;line-height:24px;text-align:right;direction:ltr;font-size:15.3px;color:#0000f0;font-weight:700;">250.00</div>
<div class="t" style="left:485px;top:27.875px;width:600px;height:24px;line-height:24px;text-align:right;direction:ltr;font-size:15.3px;color:#0000f0;font-weight:700;">143.75</div>
<div class="t" style="left:1286.5px;top:25.875px;width:600px;height:24px;line-height:24px;text-align:right;direction:ltr;font-size:15.3px;color:#333;font-weight:700;">2</div>
<div class="a" style="left:1861px;top:53px;width:31px;height:25px;background:#f0f0f0;"></div>
<div class="a" style="left:0px;top:78px;width:1861px;height:1px;background:#d8d8d8;"></div>
<div class="a" style="left:1861px;top:78px;width:31px;height:1px;background:#b4b4b4;"></div>
<div class="a" style="left:940px;top:53px;width:1px;height:25px;background:#d0d0d0;"></div>
<div class="a" style="left:1091px;top:53px;width:1px;height:25px;background:#c6d0dc;"></div>
<div class="a" style="left:1241px;top:53px;width:1px;height:25px;background:#c6d0dc;"></div>
<div class="a" style="left:1541px;top:53px;width:1px;height:25px;background:#c6d0dc;"></div>
<div class="a" style="left:1691px;top:53px;width:1px;height:25px;background:#c6d0dc;"></div>
<div class="a" style="left:1841px;top:53px;width:1px;height:25px;background:#c6d0dc;"></div>
<div class="a" style="left:1861px;top:53px;width:1px;height:25px;background:#b4b4b4;"></div>
<div class="a" style="left:1845px;top:59px;width:11px;height:12px;background:transparent;border:1px solid #333"></div>
<svg style="left:1845px;top:59px" width="11" height="12"><path d="M5.5 2.5 V9.5 M2 6 H9" stroke="#333" stroke-width="1"/></svg>
<div class="t" style="left:1235px;top:54.125px;width:600px;height:24px;line-height:24px;text-align:right;direction:rtl;font-size:14.9px;color:#0000f0;font-weight:700;">مبيع.نقدي: 2</div>
<div class="t" style="left:1085px;top:54.125px;width:600px;height:24px;line-height:24px;text-align:right;direction:ltr;font-size:15.3px;color:#0000f0;font-weight:700;">11-3-2025</div>
<div class="t" style="left:935px;top:54.125px;width:600px;height:24px;line-height:24px;text-align:right;direction:rtl;font-size:14.2px;color:#0000f0;font-weight:700;">محمد سليم</div>
<div class="t" style="left:635px;top:54.125px;width:600px;height:24px;line-height:24px;text-align:right;direction:ltr;font-size:15.3px;color:#0000f0;font-weight:700;">10.00</div>
<div class="t" style="left:485px;top:54.125px;width:600px;height:24px;line-height:24px;text-align:right;direction:ltr;font-size:15.3px;color:#0000f0;font-weight:700;">5.75</div>
<div class="t" style="left:1286.5px;top:52.125px;width:600px;height:24px;line-height:24px;text-align:right;direction:ltr;font-size:15.3px;color:#333;font-weight:700;">3</div>
<div class="a" style="left:1861px;top:79px;width:31px;height:26px;background:#f0f0f0;"></div>
<div class="a" style="left:0px;top:105px;width:1861px;height:1px;background:#d8d8d8;"></div>
<div class="a" style="left:1861px;top:105px;width:31px;height:1px;background:#b4b4b4;"></div>
<div class="a" style="left:940px;top:79px;width:1px;height:26px;background:#d0d0d0;"></div>
<div class="a" style="left:1091px;top:79px;width:1px;height:26px;background:#c6d0dc;"></div>
<div class="a" style="left:1241px;top:79px;width:1px;height:26px;background:#c6d0dc;"></div>
<div class="a" style="left:1541px;top:79px;width:1px;height:26px;background:#c6d0dc;"></div>
<div class="a" style="left:1691px;top:79px;width:1px;height:26px;background:#c6d0dc;"></div>
<div class="a" style="left:1841px;top:79px;width:1px;height:26px;background:#c6d0dc;"></div>
<div class="a" style="left:1861px;top:79px;width:1px;height:26px;background:#b4b4b4;"></div>
<div class="a" style="left:1845px;top:85px;width:11px;height:12px;background:transparent;border:1px solid #333"></div>
<svg style="left:1845px;top:85px" width="11" height="12"><path d="M5.5 2.5 V9.5 M2 6 H9" stroke="#333" stroke-width="1"/></svg>
<div class="t" style="left:1235px;top:80.375px;width:600px;height:24px;line-height:24px;text-align:right;direction:rtl;font-size:14.9px;color:#0000f0;font-weight:700;">مبيع.نقدي: 3</div>
<div class="t" style="left:1085px;top:80.375px;width:600px;height:24px;line-height:24px;text-align:right;direction:ltr;font-size:15.3px;color:#0000f0;font-weight:700;">11-3-2025</div>
<div class="t" style="left:935px;top:80.375px;width:600px;height:24px;line-height:24px;text-align:right;direction:rtl;font-size:14.2px;color:#0000f0;font-weight:700;">شركة العليان لتجارة المواد الغذائية</div>
<div class="t" style="left:635px;top:80.375px;width:600px;height:24px;line-height:24px;text-align:right;direction:ltr;font-size:15.3px;color:#0000f0;font-weight:700;">1.00</div>
<div class="t" style="left:485px;top:80.375px;width:600px;height:24px;line-height:24px;text-align:right;direction:ltr;font-size:15.3px;color:#0000f0;font-weight:700;">1.50</div>
<div class="t" style="left:1286.5px;top:78.375px;width:600px;height:24px;line-height:24px;text-align:right;direction:ltr;font-size:15.3px;color:#333;font-weight:700;">4</div>
<div class="a" style="left:1861px;top:106px;width:31px;height:25px;background:#f0f0f0;"></div>
<div class="a" style="left:0px;top:131px;width:1861px;height:1px;background:#d8d8d8;"></div>
<div class="a" style="left:1861px;top:131px;width:31px;height:1px;background:#b4b4b4;"></div>
<div class="a" style="left:940px;top:106px;width:1px;height:25px;background:#d0d0d0;"></div>
<div class="a" style="left:1091px;top:106px;width:1px;height:25px;background:#c6d0dc;"></div>
<div class="a" style="left:1241px;top:106px;width:1px;height:25px;background:#c6d0dc;"></div>
<div class="a" style="left:1541px;top:106px;width:1px;height:25px;background:#c6d0dc;"></div>
<div class="a" style="left:1691px;top:106px;width:1px;height:25px;background:#c6d0dc;"></div>
<div class="a" style="left:1841px;top:106px;width:1px;height:25px;background:#c6d0dc;"></div>
<div class="a" style="left:1861px;top:106px;width:1px;height:25px;background:#b4b4b4;"></div>
<div class="a" style="left:1845px;top:112px;width:11px;height:12px;background:transparent;border:1px solid #333"></div>
<svg style="left:1845px;top:112px" width="11" height="12"><path d="M5.5 2.5 V9.5 M2 6 H9" stroke="#333" stroke-width="1"/></svg>
<div class="t" style="left:1235px;top:106.625px;width:600px;height:24px;line-height:24px;text-align:right;direction:rtl;font-size:14.9px;color:#0000f0;font-weight:700;">مبيع.نقدي: 4</div>
<div class="t" style="left:1085px;top:106.625px;width:600px;height:24px;line-height:24px;text-align:right;direction:ltr;font-size:15.3px;color:#0000f0;font-weight:700;">11-3-2025</div>
<div class="t" style="left:935px;top:106.625px;width:600px;height:24px;line-height:24px;text-align:right;direction:rtl;font-size:14.2px;color:#0000f0;font-weight:700;">شركة عبد السلام للتجارة</div>
<div class="t" style="left:635px;top:106.625px;width:600px;height:24px;line-height:24px;text-align:right;direction:ltr;font-size:15.3px;color:#0000f0;font-weight:700;">1.00</div>
<div class="t" style="left:485px;top:106.625px;width:600px;height:24px;line-height:24px;text-align:right;direction:ltr;font-size:15.3px;color:#0000f0;font-weight:700;">1.50</div>
<div class="t" style="left:1286.5px;top:104.625px;width:600px;height:24px;line-height:24px;text-align:right;direction:ltr;font-size:15.3px;color:#333;font-weight:700;">5</div>
<div class="a" style="left:1861px;top:132px;width:31px;height:25px;background:#f0f0f0;"></div>
<div class="a" style="left:0px;top:157px;width:1861px;height:1px;background:#d8d8d8;"></div>
<div class="a" style="left:1861px;top:157px;width:31px;height:1px;background:#b4b4b4;"></div>
<div class="a" style="left:940px;top:132px;width:1px;height:25px;background:#d0d0d0;"></div>
<div class="a" style="left:1091px;top:132px;width:1px;height:25px;background:#c6d0dc;"></div>
<div class="a" style="left:1241px;top:132px;width:1px;height:25px;background:#c6d0dc;"></div>
<div class="a" style="left:1541px;top:132px;width:1px;height:25px;background:#c6d0dc;"></div>
<div class="a" style="left:1691px;top:132px;width:1px;height:25px;background:#c6d0dc;"></div>
<div class="a" style="left:1841px;top:132px;width:1px;height:25px;background:#c6d0dc;"></div>
<div class="a" style="left:1861px;top:132px;width:1px;height:25px;background:#b4b4b4;"></div>
<div class="a" style="left:1845px;top:138px;width:11px;height:12px;background:transparent;border:1px solid #333"></div>
<svg style="left:1845px;top:138px" width="11" height="12"><path d="M5.5 2.5 V9.5 M2 6 H9" stroke="#333" stroke-width="1"/></svg>
<div class="t" style="left:1235px;top:132.875px;width:600px;height:24px;line-height:24px;text-align:right;direction:rtl;font-size:14.9px;color:#0000f0;font-weight:700;">مبيع.نقدي: 5</div>
<div class="t" style="left:1085px;top:132.875px;width:600px;height:24px;line-height:24px;text-align:right;direction:ltr;font-size:15.3px;color:#0000f0;font-weight:700;">11-3-2025</div>
<div class="t" style="left:935px;top:132.875px;width:600px;height:24px;line-height:24px;text-align:right;direction:rtl;font-size:14.2px;color:#0000f0;font-weight:700;">عميل نقدي</div>
<div class="t" style="left:635px;top:132.875px;width:600px;height:24px;line-height:24px;text-align:right;direction:ltr;font-size:15.3px;color:#0000f0;font-weight:700;">1.00</div>
<div class="t" style="left:485px;top:132.875px;width:600px;height:24px;line-height:24px;text-align:right;direction:ltr;font-size:15.3px;color:#0000f0;font-weight:700;">1.50</div>
<div class="t" style="left:1286.5px;top:130.875px;width:600px;height:24px;line-height:24px;text-align:right;direction:ltr;font-size:15.3px;color:#333;font-weight:700;">6</div>
<div class="a" style="left:1861px;top:158px;width:31px;height:25px;background:#f0f0f0;"></div>
<div class="a" style="left:0px;top:183px;width:1861px;height:1px;background:#d8d8d8;"></div>
<div class="a" style="left:1861px;top:183px;width:31px;height:1px;background:#b4b4b4;"></div>
<div class="a" style="left:940px;top:158px;width:1px;height:25px;background:#d0d0d0;"></div>
<div class="a" style="left:1091px;top:158px;width:1px;height:25px;background:#c6d0dc;"></div>
<div class="a" style="left:1241px;top:158px;width:1px;height:25px;background:#c6d0dc;"></div>
<div class="a" style="left:1541px;top:158px;width:1px;height:25px;background:#c6d0dc;"></div>
<div class="a" style="left:1691px;top:158px;width:1px;height:25px;background:#c6d0dc;"></div>
<div class="a" style="left:1841px;top:158px;width:1px;height:25px;background:#c6d0dc;"></div>
<div class="a" style="left:1861px;top:158px;width:1px;height:25px;background:#b4b4b4;"></div>
<div class="a" style="left:1845px;top:164px;width:11px;height:12px;background:transparent;border:1px solid #333"></div>
<svg style="left:1845px;top:164px" width="11" height="12"><path d="M5.5 2.5 V9.5 M2 6 H9" stroke="#333" stroke-width="1"/></svg>
<div class="t" style="left:1235px;top:159.125px;width:600px;height:24px;line-height:24px;text-align:right;direction:rtl;font-size:14.9px;color:#0000f0;font-weight:700;">مبيع.نقدي: 6</div>
<div class="t" style="left:1085px;top:159.125px;width:600px;height:24px;line-height:24px;text-align:right;direction:ltr;font-size:15.3px;color:#0000f0;font-weight:700;">11-3-2025</div>
<div class="t" style="left:935px;top:159.125px;width:600px;height:24px;line-height:24px;text-align:right;direction:rtl;font-size:14.2px;color:#0000f0;font-weight:700;">محمد سليم</div>
<div class="t" style="left:635px;top:159.125px;width:600px;height:24px;line-height:24px;text-align:right;direction:ltr;font-size:15.3px;color:#0000f0;font-weight:700;">80.00</div>
<div class="t" style="left:485px;top:159.125px;width:600px;height:24px;line-height:24px;text-align:right;direction:ltr;font-size:15.3px;color:#0000f0;font-weight:700;">46.00</div>
<div class="t" style="left:1286.5px;top:157.125px;width:600px;height:24px;line-height:24px;text-align:right;direction:ltr;font-size:15.3px;color:#333;font-weight:700;">7</div>
<div class="a" style="left:1861px;top:184px;width:31px;height:26px;background:#f0f0f0;"></div>
<div class="a" style="left:0px;top:210px;width:1861px;height:1px;background:#d8d8d8;"></div>
<div class="a" style="left:1861px;top:210px;width:31px;height:1px;background:#b4b4b4;"></div>
<div class="a" style="left:940px;top:184px;width:1px;height:26px;background:#d0d0d0;"></div>
<div class="a" style="left:1091px;top:184px;width:1px;height:26px;background:#c6d0dc;"></div>
<div class="a" style="left:1241px;top:184px;width:1px;height:26px;background:#c6d0dc;"></div>
<div class="a" style="left:1541px;top:184px;width:1px;height:26px;background:#c6d0dc;"></div>
<div class="a" style="left:1691px;top:184px;width:1px;height:26px;background:#c6d0dc;"></div>
<div class="a" style="left:1841px;top:184px;width:1px;height:26px;background:#c6d0dc;"></div>
<div class="a" style="left:1861px;top:184px;width:1px;height:26px;background:#b4b4b4;"></div>
<div class="a" style="left:1845px;top:190px;width:11px;height:12px;background:transparent;border:1px solid #333"></div>
<svg style="left:1845px;top:190px" width="11" height="12"><path d="M5.5 2.5 V9.5 M2 6 H9" stroke="#333" stroke-width="1"/></svg>
<div class="t" style="left:1235px;top:185.375px;width:600px;height:24px;line-height:24px;text-align:right;direction:rtl;font-size:14.9px;color:#0000f0;font-weight:700;">مبيع.نقدي: 7</div>
<div class="t" style="left:1085px;top:185.375px;width:600px;height:24px;line-height:24px;text-align:right;direction:ltr;font-size:15.3px;color:#0000f0;font-weight:700;">11-3-2025</div>
<div class="t" style="left:935px;top:185.375px;width:600px;height:24px;line-height:24px;text-align:right;direction:rtl;font-size:14.2px;color:#0000f0;font-weight:700;">عميل نقدي</div>
<div class="t" style="left:635px;top:185.375px;width:600px;height:24px;line-height:24px;text-align:right;direction:ltr;font-size:15.3px;color:#0000f0;font-weight:700;">140.00</div>
<div class="t" style="left:485px;top:185.375px;width:600px;height:24px;line-height:24px;text-align:right;direction:ltr;font-size:15.3px;color:#0000f0;font-weight:700;">132.25</div>
<div class="t" style="left:1286.5px;top:183.375px;width:600px;height:24px;line-height:24px;text-align:right;direction:ltr;font-size:15.3px;color:#333;font-weight:700;">8</div>
<div class="a" style="left:1861px;top:211px;width:31px;height:25px;background:#f0f0f0;"></div>
<div class="a" style="left:0px;top:236px;width:1861px;height:1px;background:#d8d8d8;"></div>
<div class="a" style="left:1861px;top:236px;width:31px;height:1px;background:#b4b4b4;"></div>
<div class="a" style="left:940px;top:211px;width:1px;height:25px;background:#d0d0d0;"></div>
<div class="a" style="left:1091px;top:211px;width:1px;height:25px;background:#c6d0dc;"></div>
<div class="a" style="left:1241px;top:211px;width:1px;height:25px;background:#c6d0dc;"></div>
<div class="a" style="left:1541px;top:211px;width:1px;height:25px;background:#c6d0dc;"></div>
<div class="a" style="left:1691px;top:211px;width:1px;height:25px;background:#c6d0dc;"></div>
<div class="a" style="left:1841px;top:211px;width:1px;height:25px;background:#c6d0dc;"></div>
<div class="a" style="left:1861px;top:211px;width:1px;height:25px;background:#b4b4b4;"></div>
<div class="a" style="left:1845px;top:217px;width:11px;height:12px;background:transparent;border:1px solid #333"></div>
<svg style="left:1845px;top:217px" width="11" height="12"><path d="M5.5 2.5 V9.5 M2 6 H9" stroke="#333" stroke-width="1"/></svg>
<div class="t" style="left:1235px;top:211.625px;width:600px;height:24px;line-height:24px;text-align:right;direction:rtl;font-size:14.9px;color:#333333;font-weight:700;">شراء.آجل: 1</div>
<div class="t" style="left:1085px;top:211.625px;width:600px;height:24px;line-height:24px;text-align:right;direction:ltr;font-size:15.3px;color:#333333;font-weight:700;">12-3-2025</div>
<div class="t" style="left:935px;top:211.625px;width:600px;height:24px;line-height:24px;text-align:right;direction:rtl;font-size:14.2px;color:#333333;font-weight:700;">شركة عبد السلام للتجارة</div>
<div class="t" style="left:635px;top:211.625px;width:600px;height:24px;line-height:24px;text-align:right;direction:ltr;font-size:15.3px;color:#333333;font-weight:700;">5,500.00</div>
<div class="t" style="left:485px;top:211.625px;width:600px;height:24px;line-height:24px;text-align:right;direction:ltr;font-size:15.3px;color:#333333;font-weight:700;">2,875.00</div>
<div class="t" style="left:1286.5px;top:209.625px;width:600px;height:24px;line-height:24px;text-align:right;direction:ltr;font-size:15.3px;color:#333;font-weight:700;">9</div>
<div class="a" style="left:1861px;top:237px;width:31px;height:25px;background:#f0f0f0;"></div>
<div class="a" style="left:0px;top:262px;width:1861px;height:1px;background:#d8d8d8;"></div>
<div class="a" style="left:1861px;top:262px;width:31px;height:1px;background:#b4b4b4;"></div>
<div class="a" style="left:940px;top:237px;width:1px;height:25px;background:#d0d0d0;"></div>
<div class="a" style="left:1091px;top:237px;width:1px;height:25px;background:#c6d0dc;"></div>
<div class="a" style="left:1241px;top:237px;width:1px;height:25px;background:#c6d0dc;"></div>
<div class="a" style="left:1541px;top:237px;width:1px;height:25px;background:#c6d0dc;"></div>
<div class="a" style="left:1691px;top:237px;width:1px;height:25px;background:#c6d0dc;"></div>
<div class="a" style="left:1841px;top:237px;width:1px;height:25px;background:#c6d0dc;"></div>
<div class="a" style="left:1861px;top:237px;width:1px;height:25px;background:#b4b4b4;"></div>
<div class="a" style="left:1845px;top:243px;width:11px;height:12px;background:transparent;border:1px solid #333"></div>
<svg style="left:1845px;top:243px" width="11" height="12"><path d="M5.5 2.5 V9.5 M2 6 H9" stroke="#333" stroke-width="1"/></svg>
<div class="t" style="left:1235px;top:237.875px;width:600px;height:24px;line-height:24px;text-align:right;direction:rtl;font-size:14.9px;color:#0000f0;font-weight:700;">مبيع.نقدي: 8</div>
<div class="t" style="left:1085px;top:237.875px;width:600px;height:24px;line-height:24px;text-align:right;direction:ltr;font-size:15.3px;color:#0000f0;font-weight:700;">12-3-2025</div>
<div class="t" style="left:935px;top:237.875px;width:600px;height:24px;line-height:24px;text-align:right;direction:rtl;font-size:14.2px;color:#0000f0;font-weight:700;">عميل نقدي</div>
<div class="t" style="left:635px;top:237.875px;width:600px;height:24px;line-height:24px;text-align:right;direction:ltr;font-size:15.3px;color:#0000f0;font-weight:700;">90.00</div>
<div class="t" style="left:485px;top:237.875px;width:600px;height:24px;line-height:24px;text-align:right;direction:ltr;font-size:15.3px;color:#0000f0;font-weight:700;">129.38</div>
<div class="t" style="left:1286.5px;top:235.875px;width:600px;height:24px;line-height:24px;text-align:right;direction:ltr;font-size:15.3px;color:#333;font-weight:700;">10</div>
<div class="a" style="left:1861px;top:263px;width:31px;height:25px;background:#f0f0f0;"></div>
<div class="a" style="left:0px;top:288px;width:1861px;height:1px;background:#d8d8d8;"></div>
<div class="a" style="left:1861px;top:288px;width:31px;height:1px;background:#b4b4b4;"></div>
<div class="a" style="left:940px;top:263px;width:1px;height:25px;background:#d0d0d0;"></div>
<div class="a" style="left:1091px;top:263px;width:1px;height:25px;background:#c6d0dc;"></div>
<div class="a" style="left:1241px;top:263px;width:1px;height:25px;background:#c6d0dc;"></div>
<div class="a" style="left:1541px;top:263px;width:1px;height:25px;background:#c6d0dc;"></div>
<div class="a" style="left:1691px;top:263px;width:1px;height:25px;background:#c6d0dc;"></div>
<div class="a" style="left:1841px;top:263px;width:1px;height:25px;background:#c6d0dc;"></div>
<div class="a" style="left:1861px;top:263px;width:1px;height:25px;background:#b4b4b4;"></div>
<div class="a" style="left:1845px;top:269px;width:11px;height:12px;background:transparent;border:1px solid #333"></div>
<svg style="left:1845px;top:269px" width="11" height="12"><path d="M5.5 2.5 V9.5 M2 6 H9" stroke="#333" stroke-width="1"/></svg>
<div class="t" style="left:1235px;top:264.125px;width:600px;height:24px;line-height:24px;text-align:right;direction:rtl;font-size:14.9px;color:#0000f0;font-weight:700;">مبيع.آجل: 1</div>
<div class="t" style="left:1085px;top:264.125px;width:600px;height:24px;line-height:24px;text-align:right;direction:ltr;font-size:15.3px;color:#0000f0;font-weight:700;">12-3-2025</div>
<div class="t" style="left:935px;top:264.125px;width:600px;height:24px;line-height:24px;text-align:right;direction:rtl;font-size:14.2px;color:#0000f0;font-weight:700;">عميل نقدي</div>
<div class="t" style="left:635px;top:264.125px;width:600px;height:24px;line-height:24px;text-align:right;direction:ltr;font-size:15.3px;color:#0000f0;font-weight:700;">74.00</div>
<div class="t" style="left:485px;top:264.125px;width:600px;height:24px;line-height:24px;text-align:right;direction:ltr;font-size:15.3px;color:#0000f0;font-weight:700;">102.93</div>
<div class="t" style="left:1286.5px;top:262.125px;width:600px;height:24px;line-height:24px;text-align:right;direction:ltr;font-size:15.3px;color:#333;font-weight:700;">11</div>
<div class="a" style="left:1861px;top:289px;width:31px;height:26px;background:#f0f0f0;"></div>
<div class="a" style="left:0px;top:315px;width:1861px;height:1px;background:#d8d8d8;"></div>
<div class="a" style="left:1861px;top:315px;width:31px;height:1px;background:#b4b4b4;"></div>
<div class="a" style="left:940px;top:289px;width:1px;height:26px;background:#d0d0d0;"></div>
<div class="a" style="left:1091px;top:289px;width:1px;height:26px;background:#c6d0dc;"></div>
<div class="a" style="left:1241px;top:289px;width:1px;height:26px;background:#c6d0dc;"></div>
<div class="a" style="left:1541px;top:289px;width:1px;height:26px;background:#c6d0dc;"></div>
<div class="a" style="left:1691px;top:289px;width:1px;height:26px;background:#c6d0dc;"></div>
<div class="a" style="left:1841px;top:289px;width:1px;height:26px;background:#c6d0dc;"></div>
<div class="a" style="left:1861px;top:289px;width:1px;height:26px;background:#b4b4b4;"></div>
<div class="a" style="left:1845px;top:295px;width:11px;height:12px;background:transparent;border:1px solid #333"></div>
<svg style="left:1845px;top:295px" width="11" height="12"><path d="M5.5 2.5 V9.5 M2 6 H9" stroke="#333" stroke-width="1"/></svg>
<div class="t" style="left:1235px;top:290.375px;width:600px;height:24px;line-height:24px;text-align:right;direction:rtl;font-size:14.9px;color:#333333;font-weight:700;">م. مبيع: 1</div>
<div class="t" style="left:1085px;top:290.375px;width:600px;height:24px;line-height:24px;text-align:right;direction:ltr;font-size:15.3px;color:#333333;font-weight:700;">12-3-2025</div>
<div class="t" style="left:935px;top:290.375px;width:600px;height:24px;line-height:24px;text-align:right;direction:rtl;font-size:14.2px;color:#333333;font-weight:700;">عميل نقدي</div>
<div class="t" style="left:635px;top:290.375px;width:600px;height:24px;line-height:24px;text-align:right;direction:ltr;font-size:15.3px;color:#333333;font-weight:700;">30.00</div>
<div class="t" style="left:485px;top:290.375px;width:600px;height:24px;line-height:24px;text-align:right;direction:ltr;font-size:15.3px;color:#333333;font-weight:700;">43.13</div>
<div class="t" style="left:1286.5px;top:288.375px;width:600px;height:24px;line-height:24px;text-align:right;direction:ltr;font-size:15.3px;color:#333;font-weight:700;">12</div>
<div class="a" style="left:1861px;top:316px;width:31px;height:25px;background:#f0f0f0;"></div>
<div class="a" style="left:0px;top:341px;width:1861px;height:1px;background:#d8d8d8;"></div>
<div class="a" style="left:1861px;top:341px;width:31px;height:1px;background:#b4b4b4;"></div>
<div class="a" style="left:940px;top:316px;width:1px;height:25px;background:#d0d0d0;"></div>
<div class="a" style="left:1091px;top:316px;width:1px;height:25px;background:#c6d0dc;"></div>
<div class="a" style="left:1241px;top:316px;width:1px;height:25px;background:#c6d0dc;"></div>
<div class="a" style="left:1541px;top:316px;width:1px;height:25px;background:#c6d0dc;"></div>
<div class="a" style="left:1691px;top:316px;width:1px;height:25px;background:#c6d0dc;"></div>
<div class="a" style="left:1841px;top:316px;width:1px;height:25px;background:#c6d0dc;"></div>
<div class="a" style="left:1861px;top:316px;width:1px;height:25px;background:#b4b4b4;"></div>
<div class="a" style="left:1845px;top:322px;width:11px;height:12px;background:transparent;border:1px solid #333"></div>
<svg style="left:1845px;top:322px" width="11" height="12"><path d="M5.5 2.5 V9.5 M2 6 H9" stroke="#333" stroke-width="1"/></svg>
<div class="t" style="left:1235px;top:316.625px;width:600px;height:24px;line-height:24px;text-align:right;direction:rtl;font-size:14.9px;color:#333333;font-weight:700;">شراء.نقدي: 1</div>
<div class="t" style="left:1085px;top:316.625px;width:600px;height:24px;line-height:24px;text-align:right;direction:ltr;font-size:15.3px;color:#333333;font-weight:700;">13-3-2025</div>
<div class="t" style="left:935px;top:316.625px;width:600px;height:24px;line-height:24px;text-align:right;direction:rtl;font-size:14.2px;color:#333333;font-weight:700;">شركة يونس موسى واخوانه للمواد الغذائية</div>
<div class="t" style="left:635px;top:316.625px;width:600px;height:24px;line-height:24px;text-align:right;direction:ltr;font-size:15.3px;color:#333333;font-weight:700;">250.00</div>
<div class="t" style="left:485px;top:316.625px;width:600px;height:24px;line-height:24px;text-align:right;direction:ltr;font-size:15.3px;color:#333333;font-weight:700;">1,725.00</div>
<div class="t" style="left:1286.5px;top:314.625px;width:600px;height:24px;line-height:24px;text-align:right;direction:ltr;font-size:15.3px;color:#333;font-weight:700;">13</div>
<div class="a" style="left:1861px;top:342px;width:31px;height:25px;background:#f0f0f0;"></div>
<div class="a" style="left:0px;top:367px;width:1861px;height:1px;background:#d8d8d8;"></div>
<div class="a" style="left:1861px;top:367px;width:31px;height:1px;background:#b4b4b4;"></div>
<div class="a" style="left:940px;top:342px;width:1px;height:25px;background:#d0d0d0;"></div>
<div class="a" style="left:1091px;top:342px;width:1px;height:25px;background:#c6d0dc;"></div>
<div class="a" style="left:1241px;top:342px;width:1px;height:25px;background:#c6d0dc;"></div>
<div class="a" style="left:1541px;top:342px;width:1px;height:25px;background:#c6d0dc;"></div>
<div class="a" style="left:1691px;top:342px;width:1px;height:25px;background:#c6d0dc;"></div>
<div class="a" style="left:1841px;top:342px;width:1px;height:25px;background:#c6d0dc;"></div>
<div class="a" style="left:1861px;top:342px;width:1px;height:25px;background:#b4b4b4;"></div>
<div class="a" style="left:1845px;top:348px;width:11px;height:12px;background:transparent;border:1px solid #333"></div>
<svg style="left:1845px;top:348px" width="11" height="12"><path d="M5.5 2.5 V9.5 M2 6 H9" stroke="#333" stroke-width="1"/></svg>
<div class="t" style="left:1235px;top:342.875px;width:600px;height:24px;line-height:24px;text-align:right;direction:rtl;font-size:14.9px;color:#333333;font-weight:700;">شراء.آجل: 2</div>
<div class="t" style="left:1085px;top:342.875px;width:600px;height:24px;line-height:24px;text-align:right;direction:ltr;font-size:15.3px;color:#333333;font-weight:700;">13-3-2025</div>
<div class="t" style="left:935px;top:342.875px;width:600px;height:24px;line-height:24px;text-align:right;direction:rtl;font-size:14.2px;color:#333333;font-weight:700;">شركة محمد محسن للتجارة</div>
<div class="t" style="left:635px;top:342.875px;width:600px;height:24px;line-height:24px;text-align:right;direction:ltr;font-size:15.3px;color:#333333;font-weight:700;">1,000.00</div>
<div class="t" style="left:485px;top:342.875px;width:600px;height:24px;line-height:24px;text-align:right;direction:ltr;font-size:15.3px;color:#333333;font-weight:700;">27,025.00</div>
<div class="t" style="left:1286.5px;top:340.875px;width:600px;height:24px;line-height:24px;text-align:right;direction:ltr;font-size:15.3px;color:#333;font-weight:700;">14</div>
<div class="a" style="left:1861px;top:368px;width:31px;height:25px;background:#f0f0f0;"></div>
<div class="a" style="left:0px;top:393px;width:1861px;height:1px;background:#d8d8d8;"></div>
<div class="a" style="left:1861px;top:393px;width:31px;height:1px;background:#b4b4b4;"></div>
<div class="a" style="left:940px;top:368px;width:1px;height:25px;background:#d0d0d0;"></div>
<div class="a" style="left:1091px;top:368px;width:1px;height:25px;background:#c6d0dc;"></div>
<div class="a" style="left:1241px;top:368px;width:1px;height:25px;background:#c6d0dc;"></div>
<div class="a" style="left:1541px;top:368px;width:1px;height:25px;background:#c6d0dc;"></div>
<div class="a" style="left:1691px;top:368px;width:1px;height:25px;background:#c6d0dc;"></div>
<div class="a" style="left:1841px;top:368px;width:1px;height:25px;background:#c6d0dc;"></div>
<div class="a" style="left:1861px;top:368px;width:1px;height:25px;background:#b4b4b4;"></div>
<div class="a" style="left:1845px;top:374px;width:11px;height:12px;background:transparent;border:1px solid #333"></div>
<svg style="left:1845px;top:374px" width="11" height="12"><path d="M5.5 2.5 V9.5 M2 6 H9" stroke="#333" stroke-width="1"/></svg>
<div class="t" style="left:1235px;top:369.125px;width:600px;height:24px;line-height:24px;text-align:right;direction:rtl;font-size:14.9px;color:#0000f0;font-weight:700;">إخ.م: 1</div>
<div class="t" style="left:1085px;top:369.125px;width:600px;height:24px;line-height:24px;text-align:right;direction:ltr;font-size:15.3px;color:#0000f0;font-weight:700;">13-3-2025</div>
<div class="t" style="left:635px;top:369.125px;width:600px;height:24px;line-height:24px;text-align:right;direction:ltr;font-size:15.3px;color:#0000f0;font-weight:700;">75.00</div>
<div class="t" style="left:485px;top:369.125px;width:600px;height:24px;line-height:24px;text-align:right;direction:ltr;font-size:15.3px;color:#0000f0;font-weight:700;">0.00</div>
<div class="t" style="left:1286.5px;top:367.125px;width:600px;height:24px;line-height:24px;text-align:right;direction:ltr;font-size:15.3px;color:#333;font-weight:700;">15</div>
<div class="a" style="left:1861px;top:394px;width:31px;height:26px;background:#f0f0f0;"></div>
<div class="a" style="left:0px;top:420px;width:1861px;height:1px;background:#d8d8d8;"></div>
<div class="a" style="left:1861px;top:420px;width:31px;height:1px;background:#b4b4b4;"></div>
<div class="a" style="left:940px;top:394px;width:1px;height:26px;background:#d0d0d0;"></div>
<div class="a" style="left:1091px;top:394px;width:1px;height:26px;background:#c6d0dc;"></div>
<div class="a" style="left:1241px;top:394px;width:1px;height:26px;background:#c6d0dc;"></div>
<div class="a" style="left:1541px;top:394px;width:1px;height:26px;background:#c6d0dc;"></div>
<div class="a" style="left:1691px;top:394px;width:1px;height:26px;background:#c6d0dc;"></div>
<div class="a" style="left:1841px;top:394px;width:1px;height:26px;background:#c6d0dc;"></div>
<div class="a" style="left:1861px;top:394px;width:1px;height:26px;background:#b4b4b4;"></div>
<div class="a" style="left:1845px;top:400px;width:11px;height:12px;background:transparent;border:1px solid #333"></div>
<svg style="left:1845px;top:400px" width="11" height="12"><path d="M5.5 2.5 V9.5 M2 6 H9" stroke="#333" stroke-width="1"/></svg>
<div class="t" style="left:1235px;top:395.375px;width:600px;height:24px;line-height:24px;text-align:right;direction:rtl;font-size:14.9px;color:#0000f0;font-weight:700;">إخ.م: 1</div>
<div class="t" style="left:1085px;top:395.375px;width:600px;height:24px;line-height:24px;text-align:right;direction:ltr;font-size:15.3px;color:#0000f0;font-weight:700;">13-3-2025</div>
<div class="t" style="left:635px;top:395.375px;width:600px;height:24px;line-height:24px;text-align:right;direction:ltr;font-size:15.3px;color:#0000f0;font-weight:700;">75.00</div>
<div class="t" style="left:485px;top:395.375px;width:600px;height:24px;line-height:24px;text-align:right;direction:ltr;font-size:15.3px;color:#0000f0;font-weight:700;">0.00</div>
<div class="t" style="left:1286.5px;top:393.375px;width:600px;height:24px;line-height:24px;text-align:right;direction:ltr;font-size:15.3px;color:#333;font-weight:700;">16</div>
</div>
<div class="a" style="left:3px;top:697px;width:1915px;height:1px;background:#b0b0b0;"></div>
<div class="a" style="left:2px;top:698px;width:1916px;height:7px;background:#e6e6e6;"></div>
<div class="a" style="left:3px;top:705px;width:1915px;height:1px;background:#a8a8a8;"></div>
<div class="a" style="left:3px;top:705px;width:1915px;height:290px;background:#ffffff;"></div>
<div class="a" style="left:3px;top:705px;width:1px;height:290px;background:#a8a8a8;"></div>
<div class="a" style="left:3px;top:705px;width:1915px;height:1px;background:#a8a8a8;"></div>
<div class="a" style="left:4px;top:706px;width:1914px;height:26px;background:#f0f0f0;"></div>
<div class="a" style="left:4px;top:732px;width:1914px;height:1px;background:#a8a8a8;"></div>
<div class="a" style="left:25px;top:706px;width:1px;height:26px;background:#b4b4b4;"></div>
<div class="a" style="left:398px;top:706px;width:1px;height:26px;background:#b4b4b4;"></div>
<div class="a" style="left:770px;top:706px;width:1px;height:26px;background:#b4b4b4;"></div>
<div class="a" style="left:1143px;top:706px;width:1px;height:26px;background:#b4b4b4;"></div>
<div class="a" style="left:1515px;top:706px;width:1px;height:26px;background:#b4b4b4;"></div>
<div class="a" style="left:1888px;top:706px;width:1px;height:26px;background:#b4b4b4;"></div>
<div class="t r" style="left:12.0px;top:708.0px;width:400px;height:24px;line-height:24px;text-align:center;font-size:14px;color:#444;font-weight:400;">الكمية</div>
<div class="t r" style="left:384.0px;top:708.0px;width:400px;height:24px;line-height:24px;text-align:center;font-size:14px;color:#444;font-weight:400;">مجموع الآجل</div>
<div class="t r" style="left:756.5px;top:708.0px;width:400px;height:24px;line-height:24px;text-align:center;font-size:14px;color:#444;font-weight:400;">مجموع النقدي</div>
<div class="t r" style="left:1129.0px;top:708.0px;width:400px;height:24px;line-height:24px;text-align:center;font-size:14px;color:#444;font-weight:400;">المجموع الجزئي</div>
<div class="t r" style="left:1501.5px;top:708.0px;width:400px;height:24px;line-height:24px;text-align:center;font-size:14px;color:#444;font-weight:400;">الفاتورة</div>
<div class="a" style="left:4px;top:733px;width:22px;height:262px;background:#f0f0f0;"></div>
<div class="a" style="left:6px;top:734px;width:17px;height:17px;background:#d6d6d6;"></div>
<svg style="left:6px;top:734px" width="17" height="17" viewBox="0 0 17 17"><path d="M3.5 10.5 H13.5 L8.5 5 Z" fill="#404040"/></svg>
<div class="a" style="left:6px;top:753px;width:17px;height:181px;background:#d6d6d6;"></div>
<div class="a" style="left:6px;top:976px;width:17px;height:17px;background:#d6d6d6;"></div>
<svg style="left:6px;top:976px" width="17" height="17" viewBox="0 0 17 17"><path d="M3.5 6.5 H13.5 L8.5 12 Z" fill="#404040"/></svg>
<div class="a" style="left:1888px;top:733px;width:30px;height:25px;background:#f0f0f0;"></div>
<div class="a" style="left:26px;top:758px;width:1862px;height:1px;background:#d8d8d8;"></div>
<div class="a" style="left:1888px;top:758px;width:30px;height:1px;background:#b4b4b4;"></div>
<div class="a" style="left:398px;top:733px;width:1px;height:25px;background:#c6d0dc;"></div>
<div class="a" style="left:770px;top:733px;width:1px;height:25px;background:#c6d0dc;"></div>
<div class="a" style="left:1143px;top:733px;width:1px;height:25px;background:#c6d0dc;"></div>
<div class="a" style="left:1515px;top:733px;width:1px;height:25px;background:#c6d0dc;"></div>
<div class="a" style="left:1888px;top:733px;width:1px;height:25px;background:#d0d0d0;"></div>
<div class="t" style="left:1282px;top:732.625px;width:600px;height:24px;line-height:24px;text-align:right;direction:rtl;font-size:14.2px;color:#333;font-weight:400">بضاعة أول المدة</div>
<div class="t" style="left:909px;top:733.625px;width:600px;height:24px;line-height:24px;text-align:right;direction:ltr;font-size:14px;color:#333;font-weight:400">49,500.00</div>
<div class="t" style="left:537px;top:733.625px;width:600px;height:24px;line-height:24px;text-align:right;direction:ltr;font-size:14px;color:#333;font-weight:400">49,500.00</div>
<div class="t" style="left:164px;top:733.625px;width:600px;height:24px;line-height:24px;text-align:right;direction:ltr;font-size:14px;color:#333;font-weight:400">0.00</div>
<div class="t" style="left:-208px;top:733.625px;width:600px;height:24px;line-height:24px;text-align:right;direction:ltr;font-size:14px;color:#333;font-weight:400">30,500.00</div>
<div class="t" style="left:1312px;top:731.625px;width:600px;height:24px;line-height:24px;text-align:right;direction:ltr;font-size:14px;color:#444;font-weight:400">1</div>
<div class="a" style="left:1888px;top:759px;width:30px;height:25px;background:#f0f0f0;"></div>
<div class="a" style="left:26px;top:784px;width:1862px;height:1px;background:#d8d8d8;"></div>
<div class="a" style="left:1888px;top:784px;width:30px;height:1px;background:#b4b4b4;"></div>
<div class="a" style="left:398px;top:759px;width:1px;height:25px;background:#c6d0dc;"></div>
<div class="a" style="left:770px;top:759px;width:1px;height:25px;background:#c6d0dc;"></div>
<div class="a" style="left:1143px;top:759px;width:1px;height:25px;background:#c6d0dc;"></div>
<div class="a" style="left:1515px;top:759px;width:1px;height:25px;background:#c6d0dc;"></div>
<div class="a" style="left:1888px;top:759px;width:1px;height:25px;background:#d0d0d0;"></div>
<div class="t" style="left:1282px;top:758.875px;width:600px;height:24px;line-height:24px;text-align:right;direction:rtl;font-size:14.2px;color:#333;font-weight:400">مبيعات نقدية</div>
<div class="t" style="left:909px;top:759.875px;width:600px;height:24px;line-height:24px;text-align:right;direction:ltr;font-size:14px;color:#333;font-weight:400">38,998.46</div>
<div class="t" style="left:537px;top:759.875px;width:600px;height:24px;line-height:24px;text-align:right;direction:ltr;font-size:14px;color:#333;font-weight:400">38,845.97</div>
<div class="t" style="left:164px;top:759.875px;width:600px;height:24px;line-height:24px;text-align:right;direction:ltr;font-size:14px;color:#333;font-weight:400">152.49</div>
<div class="t" style="left:-208px;top:759.875px;width:600px;height:24px;line-height:24px;text-align:right;direction:ltr;font-size:14px;color:#333;font-weight:400">6,652.00</div>
<div class="t" style="left:1312px;top:757.875px;width:600px;height:24px;line-height:24px;text-align:right;direction:ltr;font-size:14px;color:#444;font-weight:400">2</div>
<div class="a" style="left:1888px;top:785px;width:30px;height:25px;background:#f0f0f0;"></div>
<div class="a" style="left:26px;top:810px;width:1862px;height:1px;background:#d8d8d8;"></div>
<div class="a" style="left:1888px;top:810px;width:30px;height:1px;background:#b4b4b4;"></div>
<div class="a" style="left:398px;top:785px;width:1px;height:25px;background:#c6d0dc;"></div>
<div class="a" style="left:770px;top:785px;width:1px;height:25px;background:#c6d0dc;"></div>
<div class="a" style="left:1143px;top:785px;width:1px;height:25px;background:#c6d0dc;"></div>
<div class="a" style="left:1515px;top:785px;width:1px;height:25px;background:#c6d0dc;"></div>
<div class="a" style="left:1888px;top:785px;width:1px;height:25px;background:#d0d0d0;"></div>
<div class="t" style="left:1282px;top:785.125px;width:600px;height:24px;line-height:24px;text-align:right;direction:rtl;font-size:14.2px;color:#333;font-weight:400">مشتريات آجلة</div>
<div class="t" style="left:909px;top:786.125px;width:600px;height:24px;line-height:24px;text-align:right;direction:ltr;font-size:14px;color:#333;font-weight:400">300,072.38</div>
<div class="t" style="left:537px;top:786.125px;width:600px;height:24px;line-height:24px;text-align:right;direction:ltr;font-size:14px;color:#333;font-weight:400">1,250.00</div>
<div class="t" style="left:164px;top:786.125px;width:600px;height:24px;line-height:24px;text-align:right;direction:ltr;font-size:14px;color:#333;font-weight:400">298,822.38</div>
<div class="t" style="left:-208px;top:786.125px;width:600px;height:24px;line-height:24px;text-align:right;direction:ltr;font-size:14px;color:#333;font-weight:400">27,136.67</div>
<div class="t" style="left:1312px;top:784.125px;width:600px;height:24px;line-height:24px;text-align:right;direction:ltr;font-size:14px;color:#444;font-weight:400">3</div>
<div class="a" style="left:1888px;top:811px;width:30px;height:26px;background:#f0f0f0;"></div>
<div class="a" style="left:26px;top:837px;width:1862px;height:1px;background:#d8d8d8;"></div>
<div class="a" style="left:1888px;top:837px;width:30px;height:1px;background:#b4b4b4;"></div>
<div class="a" style="left:398px;top:811px;width:1px;height:26px;background:#c6d0dc;"></div>
<div class="a" style="left:770px;top:811px;width:1px;height:26px;background:#c6d0dc;"></div>
<div class="a" style="left:1143px;top:811px;width:1px;height:26px;background:#c6d0dc;"></div>
<div class="a" style="left:1515px;top:811px;width:1px;height:26px;background:#c6d0dc;"></div>
<div class="a" style="left:1888px;top:811px;width:1px;height:26px;background:#d0d0d0;"></div>
<div class="t" style="left:1282px;top:811.375px;width:600px;height:24px;line-height:24px;text-align:right;direction:rtl;font-size:14.2px;color:#333;font-weight:400">مبيعات آجلة</div>
<div class="t" style="left:909px;top:812.375px;width:600px;height:24px;line-height:24px;text-align:right;direction:ltr;font-size:14px;color:#333;font-weight:400">19,583.01</div>
<div class="t" style="left:537px;top:812.375px;width:600px;height:24px;line-height:24px;text-align:right;direction:ltr;font-size:14px;color:#333;font-weight:400">0.00</div>
<div class="t" style="left:164px;top:812.375px;width:600px;height:24px;line-height:24px;text-align:right;direction:ltr;font-size:14px;color:#333;font-weight:400">19,583.01</div>
<div class="t" style="left:-208px;top:812.375px;width:600px;height:24px;line-height:24px;text-align:right;direction:ltr;font-size:14px;color:#333;font-weight:400">5,756.00</div>
<div class="t" style="left:1312px;top:810.375px;width:600px;height:24px;line-height:24px;text-align:right;direction:ltr;font-size:14px;color:#444;font-weight:400">4</div>
<div class="a" style="left:1888px;top:838px;width:30px;height:25px;background:#f0f0f0;"></div>
<div class="a" style="left:26px;top:863px;width:1862px;height:1px;background:#d8d8d8;"></div>
<div class="a" style="left:1888px;top:863px;width:30px;height:1px;background:#b4b4b4;"></div>
<div class="a" style="left:398px;top:838px;width:1px;height:25px;background:#c6d0dc;"></div>
<div class="a" style="left:770px;top:838px;width:1px;height:25px;background:#c6d0dc;"></div>
<div class="a" style="left:1143px;top:838px;width:1px;height:25px;background:#c6d0dc;"></div>
<div class="a" style="left:1515px;top:838px;width:1px;height:25px;background:#c6d0dc;"></div>
<div class="a" style="left:1888px;top:838px;width:1px;height:25px;background:#d0d0d0;"></div>
<div class="t" style="left:1282px;top:837.625px;width:600px;height:24px;line-height:24px;text-align:right;direction:rtl;font-size:14.2px;color:#333;font-weight:400">مرتجع مبيعات</div>
<div class="t" style="left:909px;top:838.625px;width:600px;height:24px;line-height:24px;text-align:right;direction:ltr;font-size:14px;color:#333;font-weight:400">109.25</div>
<div class="t" style="left:537px;top:838.625px;width:600px;height:24px;line-height:24px;text-align:right;direction:ltr;font-size:14px;color:#333;font-weight:400">109.25</div>
<div class="t" style="left:164px;top:838.625px;width:600px;height:24px;line-height:24px;text-align:right;direction:ltr;font-size:14px;color:#333;font-weight:400">0.00</div>
<div class="t" style="left:-208px;top:838.625px;width:600px;height:24px;line-height:24px;text-align:right;direction:ltr;font-size:14px;color:#333;font-weight:400">100.00</div>
<div class="t" style="left:1312px;top:836.625px;width:600px;height:24px;line-height:24px;text-align:right;direction:ltr;font-size:14px;color:#444;font-weight:400">5</div>
<div class="a" style="left:1888px;top:864px;width:30px;height:25px;background:#f0f0f0;"></div>
<div class="a" style="left:26px;top:889px;width:1862px;height:1px;background:#d8d8d8;"></div>
<div class="a" style="left:1888px;top:889px;width:30px;height:1px;background:#b4b4b4;"></div>
<div class="a" style="left:398px;top:864px;width:1px;height:25px;background:#c6d0dc;"></div>
<div class="a" style="left:770px;top:864px;width:1px;height:25px;background:#c6d0dc;"></div>
<div class="a" style="left:1143px;top:864px;width:1px;height:25px;background:#c6d0dc;"></div>
<div class="a" style="left:1515px;top:864px;width:1px;height:25px;background:#c6d0dc;"></div>
<div class="a" style="left:1888px;top:864px;width:1px;height:25px;background:#d0d0d0;"></div>
<div class="t" style="left:1282px;top:863.875px;width:600px;height:24px;line-height:24px;text-align:right;direction:rtl;font-size:14.2px;color:#333;font-weight:400">مشتريات نقدية</div>
<div class="t" style="left:909px;top:864.875px;width:600px;height:24px;line-height:24px;text-align:right;direction:ltr;font-size:14px;color:#333;font-weight:400">2,133.68</div>
<div class="t" style="left:537px;top:864.875px;width:600px;height:24px;line-height:24px;text-align:right;direction:ltr;font-size:14px;color:#333;font-weight:400">2,133.68</div>
<div class="t" style="left:164px;top:864.875px;width:600px;height:24px;line-height:24px;text-align:right;direction:ltr;font-size:14px;color:#333;font-weight:400">0.00</div>
<div class="t" style="left:-208px;top:864.875px;width:600px;height:24px;line-height:24px;text-align:right;direction:ltr;font-size:14px;color:#333;font-weight:400">453.00</div>
<div class="t" style="left:1312px;top:862.875px;width:600px;height:24px;line-height:24px;text-align:right;direction:ltr;font-size:14px;color:#444;font-weight:400">6</div>
<div class="a" style="left:1888px;top:890px;width:30px;height:25px;background:#f0f0f0;"></div>
<div class="a" style="left:26px;top:915px;width:1862px;height:1px;background:#d8d8d8;"></div>
<div class="a" style="left:1888px;top:915px;width:30px;height:1px;background:#b4b4b4;"></div>
<div class="a" style="left:398px;top:890px;width:1px;height:25px;background:#c6d0dc;"></div>
<div class="a" style="left:770px;top:890px;width:1px;height:25px;background:#c6d0dc;"></div>
<div class="a" style="left:1143px;top:890px;width:1px;height:25px;background:#c6d0dc;"></div>
<div class="a" style="left:1515px;top:890px;width:1px;height:25px;background:#c6d0dc;"></div>
<div class="a" style="left:1888px;top:890px;width:1px;height:25px;background:#d0d0d0;"></div>
<div class="t" style="left:1282px;top:890.125px;width:600px;height:24px;line-height:24px;text-align:right;direction:rtl;font-size:14.2px;color:#333;font-weight:400">إد.مناقلة</div>
<div class="t" style="left:909px;top:891.125px;width:600px;height:24px;line-height:24px;text-align:right;direction:ltr;font-size:14px;color:#333;font-weight:400">0.00</div>
<div class="t" style="left:537px;top:891.125px;width:600px;height:24px;line-height:24px;text-align:right;direction:ltr;font-size:14px;color:#333;font-weight:400">0.00</div>
<div class="t" style="left:164px;top:891.125px;width:600px;height:24px;line-height:24px;text-align:right;direction:ltr;font-size:14px;color:#333;font-weight:400">0.00</div>
<div class="t" style="left:-208px;top:891.125px;width:600px;height:24px;line-height:24px;text-align:right;direction:ltr;font-size:14px;color:#333;font-weight:400">1,718.00</div>
<div class="t" style="left:1312px;top:889.125px;width:600px;height:24px;line-height:24px;text-align:right;direction:ltr;font-size:14px;color:#444;font-weight:400">7</div>
<div class="a" style="left:1888px;top:916px;width:30px;height:26px;background:#f0f0f0;"></div>
<div class="a" style="left:26px;top:942px;width:1862px;height:1px;background:#d8d8d8;"></div>
<div class="a" style="left:1888px;top:942px;width:30px;height:1px;background:#b4b4b4;"></div>
<div class="a" style="left:398px;top:916px;width:1px;height:26px;background:#c6d0dc;"></div>
<div class="a" style="left:770px;top:916px;width:1px;height:26px;background:#c6d0dc;"></div>
<div class="a" style="left:1143px;top:916px;width:1px;height:26px;background:#c6d0dc;"></div>
<div class="a" style="left:1515px;top:916px;width:1px;height:26px;background:#c6d0dc;"></div>
<div class="a" style="left:1888px;top:916px;width:1px;height:26px;background:#d0d0d0;"></div>
<div class="t" style="left:1282px;top:916.375px;width:600px;height:24px;line-height:24px;text-align:right;direction:rtl;font-size:14.2px;color:#333;font-weight:400">إخ.مناقلة</div>
<div class="t" style="left:909px;top:917.375px;width:600px;height:24px;line-height:24px;text-align:right;direction:ltr;font-size:14px;color:#333;font-weight:400">0.00</div>
<div class="t" style="left:537px;top:917.375px;width:600px;height:24px;line-height:24px;text-align:right;direction:ltr;font-size:14px;color:#333;font-weight:400">0.00</div>
<div class="t" style="left:164px;top:917.375px;width:600px;height:24px;line-height:24px;text-align:right;direction:ltr;font-size:14px;color:#333;font-weight:400">0.00</div>
<div class="t" style="left:-208px;top:917.375px;width:600px;height:24px;line-height:24px;text-align:right;direction:ltr;font-size:14px;color:#333;font-weight:400">1,718.00</div>
<div class="t" style="left:1312px;top:915.375px;width:600px;height:24px;line-height:24px;text-align:right;direction:ltr;font-size:14px;color:#444;font-weight:400">8</div>
<div class="a" style="left:1888px;top:943px;width:30px;height:25px;background:#f0f0f0;"></div>
<div class="a" style="left:26px;top:968px;width:1862px;height:1px;background:#d8d8d8;"></div>
<div class="a" style="left:1888px;top:968px;width:30px;height:1px;background:#b4b4b4;"></div>
<div class="a" style="left:398px;top:943px;width:1px;height:25px;background:#c6d0dc;"></div>
<div class="a" style="left:770px;top:943px;width:1px;height:25px;background:#c6d0dc;"></div>
<div class="a" style="left:1143px;top:943px;width:1px;height:25px;background:#c6d0dc;"></div>
<div class="a" style="left:1515px;top:943px;width:1px;height:25px;background:#c6d0dc;"></div>
<div class="a" style="left:1888px;top:943px;width:1px;height:25px;background:#d0d0d0;"></div>
<div class="t" style="left:1282px;top:942.625px;width:600px;height:24px;line-height:24px;text-align:right;direction:rtl;font-size:14.2px;color:#333;font-weight:400">إدخال مواد جاهزة</div>
<div class="t" style="left:909px;top:943.625px;width:600px;height:24px;line-height:24px;text-align:right;direction:ltr;font-size:14px;color:#333;font-weight:400">110.44</div>
<div class="t" style="left:537px;top:943.625px;width:600px;height:24px;line-height:24px;text-align:right;direction:ltr;font-size:14px;color:#333;font-weight:400">0.00</div>
<div class="t" style="left:164px;top:943.625px;width:600px;height:24px;line-height:24px;text-align:right;direction:ltr;font-size:14px;color:#333;font-weight:400">110.44</div>
<div class="t" style="left:-208px;top:943.625px;width:600px;height:24px;line-height:24px;text-align:right;direction:ltr;font-size:14px;color:#333;font-weight:400">10.00</div>
<div class="t" style="left:1312px;top:941.625px;width:600px;height:24px;line-height:24px;text-align:right;direction:ltr;font-size:14px;color:#444;font-weight:400">9</div>
<div class="a" style="left:1888px;top:969px;width:30px;height:25px;background:#f0f0f0;"></div>
<div class="a" style="left:398px;top:969px;width:1px;height:25px;background:#c6d0dc;"></div>
<div class="a" style="left:770px;top:969px;width:1px;height:25px;background:#c6d0dc;"></div>
<div class="a" style="left:1143px;top:969px;width:1px;height:25px;background:#c6d0dc;"></div>
<div class="a" style="left:1515px;top:969px;width:1px;height:25px;background:#c6d0dc;"></div>
<div class="a" style="left:1888px;top:969px;width:1px;height:25px;background:#d0d0d0;"></div>
<div class="t" style="left:1282px;top:968.875px;width:600px;height:24px;line-height:24px;text-align:right;direction:rtl;font-size:14.2px;color:#333;font-weight:400">إخراج مواد أولية</div>
<div class="t" style="left:909px;top:969.875px;width:600px;height:24px;line-height:24px;text-align:right;direction:ltr;font-size:14px;color:#333;font-weight:400">110.44</div>
<div class="t" style="left:537px;top:969.875px;width:600px;height:24px;line-height:24px;text-align:right;direction:ltr;font-size:14px;color:#333;font-weight:400">0.00</div>
<div class="t" style="left:164px;top:969.875px;width:600px;height:24px;line-height:24px;text-align:right;direction:ltr;font-size:14px;color:#333;font-weight:400">110.44</div>
<div class="t" style="left:-208px;top:969.875px;width:600px;height:24px;line-height:24px;text-align:right;direction:ltr;font-size:14px;color:#333;font-weight:400">10.56</div>
<div class="t" style="left:1312px;top:967.875px;width:600px;height:24px;line-height:24px;text-align:right;direction:ltr;font-size:14px;color:#444;font-weight:400">10</div>
<div class="a" style="left:3px;top:995px;width:1915px;height:3px;background:#c8c8c8;"></div>
<div class="a" style="left:2px;top:998px;width:1916px;height:29px;background:#f0f0f0;"></div>
<div class="t r" style="left:-736px;top:1001.0px;width:800px;height:24px;line-height:24px;text-align:right;font-size:14px;color:#333;font-weight:400;">89 عنصراً</div>
</body></html>
